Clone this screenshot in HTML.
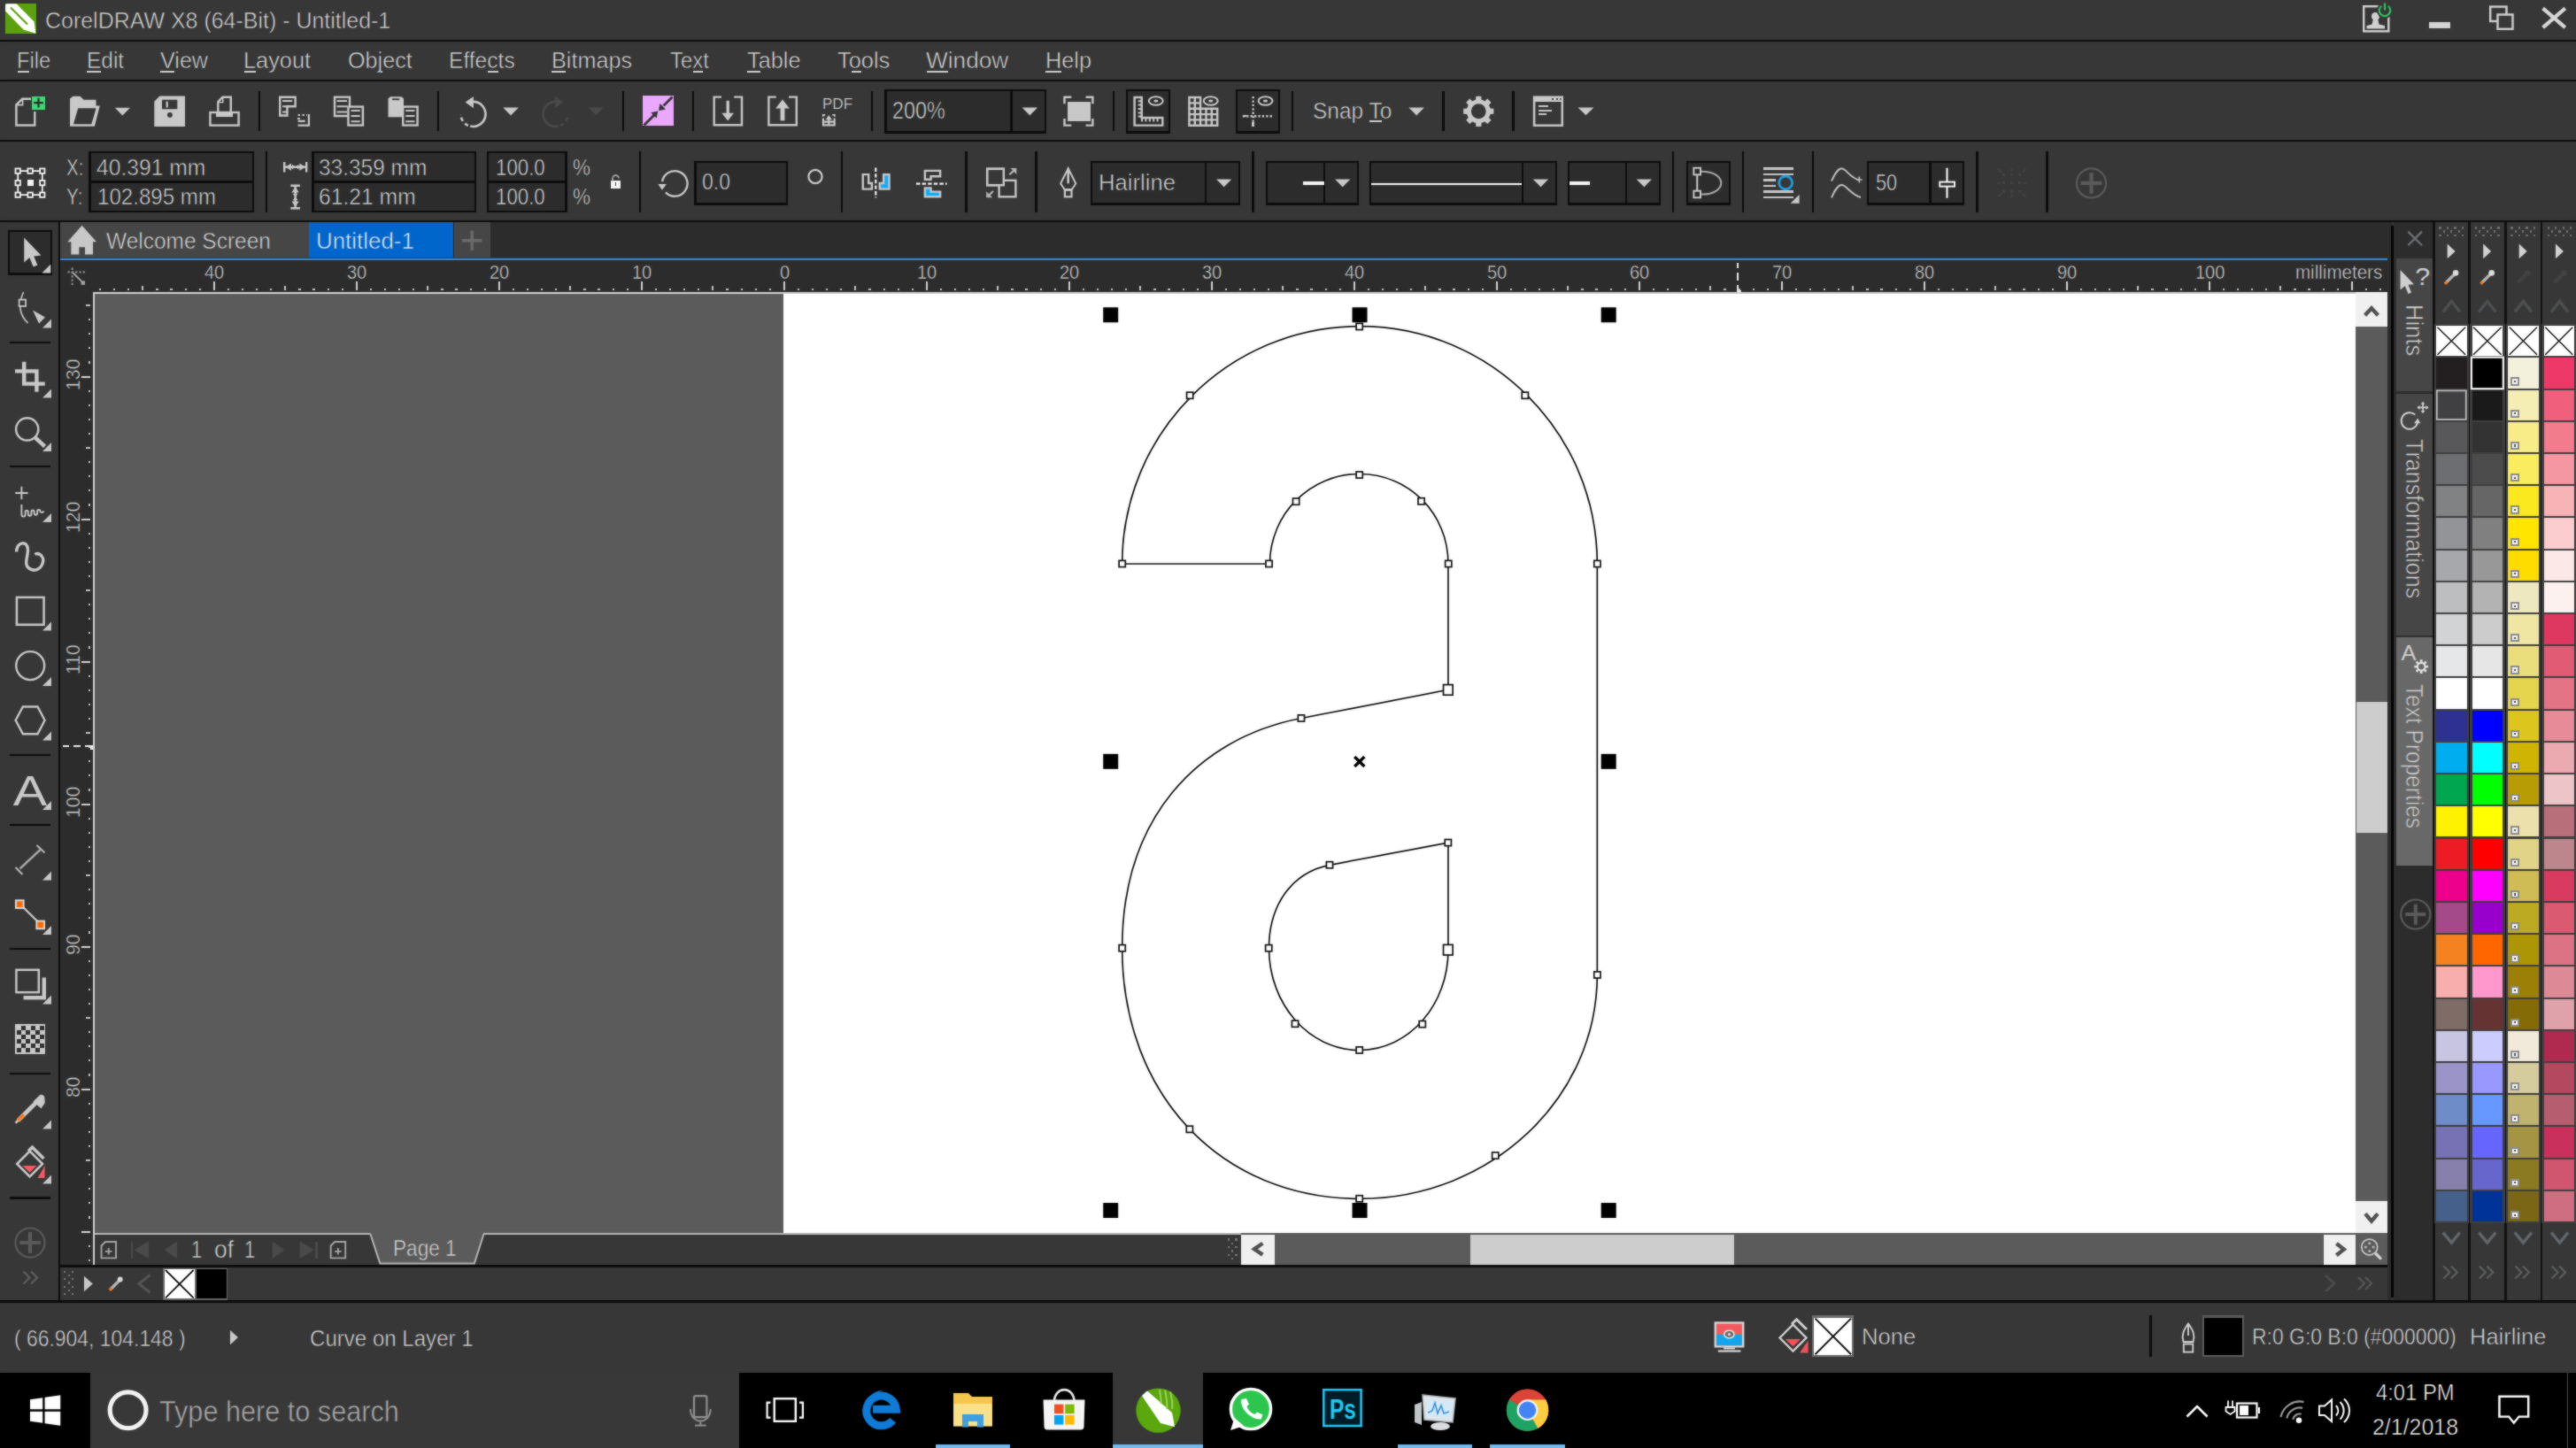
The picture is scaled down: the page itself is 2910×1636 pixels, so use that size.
<!DOCTYPE html>
<html lang="en"><head><meta charset="utf-8"><title>CorelDRAW X8 (64-Bit) - Untitled-1</title>
<style>
html,body{margin:0;padding:0;background:#373737;}
body{width:2910px;height:1636px;position:relative;overflow:hidden;font-family:"Liberation Sans",sans-serif;}
#w{position:absolute;left:0;top:0;width:2910px;height:1636px;}
#soft{position:absolute;left:0;top:0;width:2910px;height:1636px;backdrop-filter:blur(0.9px);opacity:0.5;pointer-events:none;}
#r div{position:absolute;}
.t{position:absolute;white-space:pre;transform-origin:0 0;display:block;}
.t u{text-decoration:underline;text-decoration-thickness:2px;text-underline-offset:3px;}
svg#o{position:absolute;left:0;top:0;}
svg text{font-family:"Liberation Sans",sans-serif;}
</style></head><body>
<div id="w">
<div id="r">
<div style="left:0.0px;top:44.7px;width:2910.0px;height:2.3px;background:#0c0c0c;"></div>
<div style="left:0.0px;top:89.5px;width:2910.0px;height:2.3px;background:#0c0c0c;"></div>
<div style="left:0.0px;top:157.8px;width:2910.0px;height:2.3px;background:#0c0c0c;"></div>
<div style="left:0.0px;top:249.2px;width:2910.0px;height:2.3px;background:#0c0c0c;"></div>
<span class="t" style="left:51.4px;top:8.2px;font-size:26.5px;line-height:30.45px;color:#d2d2d2;transform:scaleX(0.9419);-webkit-text-stroke:0.55px #373737;">CorelDRAW X8 (64-Bit) - Untitled-1</span>
<div style="left:19.8px;top:79.6px;width:13.7px;height:2.1px;background:#d2d2d2;"></div>
<span class="t" style="left:19.4px;top:52.7px;font-size:26.5px;line-height:30.45px;color:#d2d2d2;transform:scaleX(0.8946);-webkit-text-stroke:0.55px #373737;">File</span>
<div style="left:98.4px;top:79.6px;width:15.5px;height:2.1px;background:#d2d2d2;"></div>
<span class="t" style="left:98.0px;top:52.7px;font-size:26.5px;line-height:30.45px;color:#d2d2d2;transform:scaleX(0.9220);-webkit-text-stroke:0.55px #373737;">Edit</span>
<div style="left:181.3px;top:79.6px;width:16.0px;height:2.1px;background:#d2d2d2;"></div>
<span class="t" style="left:180.9px;top:52.7px;font-size:26.5px;line-height:30.45px;color:#d2d2d2;transform:scaleX(0.9481);-webkit-text-stroke:0.55px #373737;">View</span>
<div style="left:275.6px;top:79.6px;width:13.3px;height:2.1px;background:#d2d2d2;"></div>
<span class="t" style="left:275.2px;top:52.7px;font-size:26.5px;line-height:30.45px;color:#d2d2d2;transform:scaleX(0.9564);-webkit-text-stroke:0.55px #373737;">Layout</span>
<div style="left:427.0px;top:79.6px;width:4.8px;height:2.1px;background:#d2d2d2;"></div>
<span class="t" style="left:393.0px;top:52.7px;font-size:26.5px;line-height:30.45px;color:#d2d2d2;transform:scaleX(0.9505);-webkit-text-stroke:0.55px #373737;">Object</span>
<div style="left:551.0px;top:79.6px;width:11.5px;height:2.1px;background:#d2d2d2;"></div>
<span class="t" style="left:507.3px;top:52.7px;font-size:26.5px;line-height:30.45px;color:#d2d2d2;transform:scaleX(0.9277);-webkit-text-stroke:0.55px #373737;">Effects</span>
<div style="left:623.0px;top:79.6px;width:16.0px;height:2.1px;background:#d2d2d2;"></div>
<span class="t" style="left:622.6px;top:52.7px;font-size:26.5px;line-height:30.45px;color:#d2d2d2;transform:scaleX(0.9506);-webkit-text-stroke:0.55px #373737;">Bitmaps</span>
<div style="left:782.7px;top:79.6px;width:11.2px;height:2.1px;background:#d2d2d2;"></div>
<span class="t" style="left:757.0px;top:52.7px;font-size:26.5px;line-height:30.45px;color:#d2d2d2;transform:scaleX(0.9053);-webkit-text-stroke:0.55px #373737;">Text</span>
<div style="left:843.9px;top:79.6px;width:14.7px;height:2.1px;background:#d2d2d2;"></div>
<span class="t" style="left:843.5px;top:52.7px;font-size:26.5px;line-height:30.45px;color:#d2d2d2;transform:scaleX(0.9550);-webkit-text-stroke:0.55px #373737;">Table</span>
<div style="left:962.2px;top:79.6px;width:10.5px;height:2.1px;background:#d2d2d2;"></div>
<span class="t" style="left:946.3px;top:52.7px;font-size:26.5px;line-height:30.45px;color:#d2d2d2;transform:scaleX(0.9586);-webkit-text-stroke:0.55px #373737;">Tools</span>
<div style="left:1046.7px;top:79.6px;width:23.9px;height:2.1px;background:#d2d2d2;"></div>
<span class="t" style="left:1046.3px;top:52.7px;font-size:26.5px;line-height:30.45px;color:#d2d2d2;transform:scaleX(0.9889);-webkit-text-stroke:0.55px #373737;">Window</span>
<div style="left:1181.2px;top:79.6px;width:17.5px;height:2.1px;background:#d2d2d2;"></div>
<span class="t" style="left:1180.8px;top:52.7px;font-size:26.5px;line-height:30.45px;color:#d2d2d2;transform:scaleX(0.9541);-webkit-text-stroke:0.55px #373737;">Help</span>
<div style="left:291.5px;top:102.9px;width:2.4px;height:45.1px;background:#0c0c0c;"></div>
<div style="left:493.9px;top:102.9px;width:2.4px;height:45.1px;background:#0c0c0c;"></div>
<div style="left:702.6px;top:102.9px;width:2.4px;height:45.1px;background:#0c0c0c;"></div>
<div style="left:781.6px;top:102.9px;width:2.4px;height:45.1px;background:#0c0c0c;"></div>
<div style="left:984.0px;top:102.9px;width:2.4px;height:45.1px;background:#0c0c0c;"></div>
<div style="left:1256.8px;top:102.9px;width:2.4px;height:45.1px;background:#0c0c0c;"></div>
<div style="left:1458.8px;top:102.9px;width:2.4px;height:45.1px;background:#0c0c0c;"></div>
<div style="left:1629.4px;top:102.9px;width:2.4px;height:45.1px;background:#0c0c0c;"></div>
<div style="left:1708.2px;top:102.9px;width:2.4px;height:45.1px;background:#0c0c0c;"></div>
<div style="left:999.4px;top:100.5px;width:182.8px;height:50.1px;background:#0c0c0c;"></div>
<div style="left:1001.6px;top:102.7px;width:178.4px;height:45.7px;background:#2d2d2d;"></div>
<div style="left:1141.3px;top:100.5px;width:2.4px;height:50.1px;background:#0c0c0c;"></div>
<span class="t" style="left:1007.6px;top:110.1px;font-size:27px;line-height:31.02px;color:#d2d2d2;transform:scaleX(0.8645);-webkit-text-stroke:0.55px #2d2d2d;">200%</span>
<div style="left:1272.0px;top:100.5px;width:50.4px;height:50.1px;background:#0c0c0c;"></div>
<div style="left:1274.2px;top:102.7px;width:46.0px;height:45.7px;background:#2d2d2d;"></div>
<div style="left:1395.8px;top:100.5px;width:50.4px;height:50.1px;background:#0c0c0c;"></div>
<div style="left:1398.0px;top:102.7px;width:46.0px;height:45.7px;background:#2d2d2d;"></div>
<div style="left:1547.0px;top:136.4px;width:13.7px;height:2.1px;background:#d2d2d2;"></div>
<span class="t" style="left:1482.7px;top:109.5px;font-size:26.5px;line-height:30.45px;color:#d2d2d2;transform:scaleX(0.9229);-webkit-text-stroke:0.55px #373737;">Snap To</span>
<div style="left:300.0px;top:171.0px;width:2.4px;height:69.0px;background:#0c0c0c;"></div>
<div style="left:721.8px;top:171.0px;width:2.4px;height:69.0px;background:#0c0c0c;"></div>
<div style="left:950.1px;top:171.0px;width:2.4px;height:69.0px;background:#0c0c0c;"></div>
<div style="left:1090.4px;top:171.0px;width:2.4px;height:69.0px;background:#0c0c0c;"></div>
<div style="left:1169.4px;top:171.0px;width:2.4px;height:69.0px;background:#0c0c0c;"></div>
<div style="left:1414.4px;top:171.0px;width:2.4px;height:69.0px;background:#0c0c0c;"></div>
<div style="left:1889.1px;top:171.0px;width:2.4px;height:69.0px;background:#0c0c0c;"></div>
<div style="left:1967.9px;top:171.0px;width:2.4px;height:69.0px;background:#0c0c0c;"></div>
<div style="left:2046.9px;top:171.0px;width:2.4px;height:69.0px;background:#0c0c0c;"></div>
<div style="left:2232.3px;top:171.0px;width:2.4px;height:69.0px;background:#0c0c0c;"></div>
<div style="left:2311.3px;top:171.0px;width:2.4px;height:69.0px;background:#0c0c0c;"></div>
<span class="t" style="left:74.7px;top:174.5px;font-size:26px;line-height:29.87px;color:#d2d2d2;transform:scaleX(0.7897);-webkit-text-stroke:0.55px #373737;">X:</span>
<span class="t" style="left:74.7px;top:208.1px;font-size:26px;line-height:29.87px;color:#d2d2d2;transform:scaleX(0.7954);-webkit-text-stroke:0.55px #373737;">Y:</span>
<div style="left:100.3px;top:170.8px;width:187.0px;height:35.6px;background:#0c0c0c;"></div>
<div style="left:102.5px;top:173.0px;width:182.6px;height:31.2px;background:#2d2d2d;"></div>
<div style="left:100.3px;top:204.6px;width:187.0px;height:35.7px;background:#0c0c0c;"></div>
<div style="left:102.5px;top:206.8px;width:182.6px;height:31.3px;background:#2d2d2d;"></div>
<span class="t" style="left:108.7px;top:174.5px;font-size:26px;line-height:29.87px;color:#d2d2d2;transform:scaleX(0.9479);-webkit-text-stroke:0.55px #2d2d2d;">40.391 mm</span>
<span class="t" style="left:110.2px;top:208.1px;font-size:26px;line-height:29.87px;color:#d2d2d2;transform:scaleX(0.9271);-webkit-text-stroke:0.55px #2d2d2d;">102.895 mm</span>
<div style="left:352.3px;top:170.8px;width:185.9px;height:35.6px;background:#0c0c0c;"></div>
<div style="left:354.5px;top:173.0px;width:181.5px;height:31.2px;background:#2d2d2d;"></div>
<div style="left:352.3px;top:204.6px;width:185.9px;height:35.7px;background:#0c0c0c;"></div>
<div style="left:354.5px;top:206.8px;width:181.5px;height:31.3px;background:#2d2d2d;"></div>
<span class="t" style="left:360.0px;top:174.5px;font-size:26px;line-height:29.87px;color:#d2d2d2;transform:scaleX(0.9403);-webkit-text-stroke:0.55px #2d2d2d;">33.359 mm</span>
<span class="t" style="left:360.0px;top:208.1px;font-size:26px;line-height:29.87px;color:#d2d2d2;transform:scaleX(0.9489);-webkit-text-stroke:0.55px #2d2d2d;">61.21 mm</span>
<div style="left:549.9px;top:170.8px;width:90.8px;height:35.6px;background:#0c0c0c;"></div>
<div style="left:552.1px;top:173.0px;width:86.4px;height:31.2px;background:#2d2d2d;"></div>
<div style="left:549.9px;top:204.6px;width:90.8px;height:35.7px;background:#0c0c0c;"></div>
<div style="left:552.1px;top:206.8px;width:86.4px;height:31.3px;background:#2d2d2d;"></div>
<span class="t" style="left:559.6px;top:174.5px;font-size:26px;line-height:29.87px;color:#d2d2d2;transform:scaleX(0.8560);-webkit-text-stroke:0.55px #2d2d2d;">100.0</span>
<span class="t" style="left:559.6px;top:208.1px;font-size:26px;line-height:29.87px;color:#d2d2d2;transform:scaleX(0.8560);-webkit-text-stroke:0.55px #2d2d2d;">100.0</span>
<span class="t" style="left:647.3px;top:174.5px;font-size:26px;line-height:29.87px;color:#d2d2d2;transform:scaleX(0.8652);-webkit-text-stroke:0.55px #373737;">%</span>
<span class="t" style="left:647.3px;top:208.1px;font-size:26px;line-height:29.87px;color:#d2d2d2;transform:scaleX(0.8652);-webkit-text-stroke:0.55px #373737;">%</span>
<div style="left:784.3px;top:181.5px;width:105.7px;height:50.0px;background:#0c0c0c;"></div>
<div style="left:786.5px;top:183.7px;width:101.3px;height:45.6px;background:#2d2d2d;"></div>
<span class="t" style="left:792.5px;top:191.4px;font-size:26px;line-height:29.87px;color:#d2d2d2;transform:scaleX(0.8853);-webkit-text-stroke:0.55px #2d2d2d;">0.0</span>
<div style="left:1231.7px;top:181.5px;width:169.3px;height:50.0px;background:#0c0c0c;"></div>
<div style="left:1233.9px;top:183.7px;width:164.9px;height:45.6px;background:#2d2d2d;"></div>
<div style="left:1360.6px;top:181.5px;width:2.4px;height:50.0px;background:#0c0c0c;"></div>
<span class="t" style="left:1240.5px;top:191.0px;font-size:26.5px;line-height:30.45px;color:#d2d2d2;transform:scaleX(0.9673);-webkit-text-stroke:0.55px #2d2d2d;">Hairline</span>
<div style="left:1429.7px;top:181.5px;width:105.4px;height:50.0px;background:#0c0c0c;"></div>
<div style="left:1431.9px;top:183.7px;width:101.0px;height:45.6px;background:#2d2d2d;"></div>
<div style="left:1495.1px;top:181.5px;width:2.4px;height:50.0px;background:#0c0c0c;"></div>
<div style="left:1546.8px;top:181.5px;width:212.1px;height:50.0px;background:#0c0c0c;"></div>
<div style="left:1549.0px;top:183.7px;width:207.7px;height:45.6px;background:#2d2d2d;"></div>
<div style="left:1718.8px;top:181.5px;width:2.4px;height:50.0px;background:#0c0c0c;"></div>
<div style="left:1770.6px;top:181.5px;width:105.7px;height:50.0px;background:#0c0c0c;"></div>
<div style="left:1772.8px;top:183.7px;width:101.3px;height:45.6px;background:#2d2d2d;"></div>
<div style="left:1836.1px;top:181.5px;width:2.4px;height:50.0px;background:#0c0c0c;"></div>
<div style="left:1904.9px;top:181.5px;width:50.4px;height:50.0px;background:#0c0c0c;"></div>
<div style="left:1907.1px;top:183.7px;width:46.0px;height:45.6px;background:#2d2d2d;"></div>
<div style="left:2109.2px;top:181.5px;width:110.1px;height:50.0px;background:#0c0c0c;"></div>
<div style="left:2111.4px;top:183.7px;width:105.7px;height:45.6px;background:#2d2d2d;"></div>
<div style="left:2179.3px;top:181.5px;width:2.4px;height:50.0px;background:#0c0c0c;"></div>
<span class="t" style="left:2119.0px;top:191.5px;font-size:26px;line-height:29.87px;color:#d2d2d2;transform:scaleX(0.8367);-webkit-text-stroke:0.55px #2d2d2d;">50</span>
<div style="left:66.0px;top:251.4px;width:2.3px;height:1218.6px;background:#0c0c0c;"></div>
<div style="left:10.8px;top:385.5px;width:46.6px;height:2.4px;background:#0c0c0c;"></div>
<div style="left:10.8px;top:526.0px;width:46.6px;height:2.4px;background:#0c0c0c;"></div>
<div style="left:10.8px;top:851.8px;width:46.6px;height:2.4px;background:#0c0c0c;"></div>
<div style="left:10.8px;top:930.7px;width:46.6px;height:2.4px;background:#0c0c0c;"></div>
<div style="left:10.8px;top:1071.0px;width:46.6px;height:2.4px;background:#0c0c0c;"></div>
<div style="left:10.8px;top:1211.8px;width:46.6px;height:2.4px;background:#0c0c0c;"></div>
<div style="left:10.8px;top:1352.3px;width:46.6px;height:2.4px;background:#0c0c0c;"></div>
<div style="left:8.7px;top:260.0px;width:50.8px;height:50.7px;background:#0c0c0c;"></div>
<div style="left:11.0px;top:262.3px;width:46.2px;height:46.1px;background:#2d2d2d;"></div>
<div style="left:68.3px;top:251.4px;width:2633.7px;height:40.1px;background:#2d2d2d;"></div>
<div style="left:68.3px;top:251.4px;width:280.3px;height:40.1px;background:#464646;"></div>
<div style="left:348.6px;top:251.4px;width:163.4px;height:40.1px;background:#0066cc;"></div>
<div style="left:512.6px;top:251.4px;width:41.2px;height:40.1px;background:#464646;"></div>
<span class="t" style="left:120.3px;top:257.3px;font-size:26.5px;line-height:30.45px;color:#d2d2d2;transform:scaleX(0.9236);-webkit-text-stroke:0.55px #464646;">Welcome Screen</span>
<span class="t" style="left:357.0px;top:257.3px;font-size:26.5px;line-height:30.45px;color:#e6e6e6;transform:scaleX(0.9770);-webkit-text-stroke:0.55px #0066cc;">Untitled-1</span>
<div style="left:68.3px;top:291.5px;width:2628.9px;height:2.9px;background:#338ada;"></div>
<div style="left:68.3px;top:294.4px;width:2628.9px;height:35.8px;background:#2d2d2d;"></div>
<div style="left:68.3px;top:294.4px;width:36.5px;height:1135.1px;background:#2d2d2d;"></div>
<div style="left:104.6px;top:330.0px;width:2556.4px;height:2.4px;background:#cfcfcf;"></div>
<div style="left:104.6px;top:330.0px;width:2.4px;height:1099.5px;background:#cfcfcf;"></div>
<div style="left:107.0px;top:332.4px;width:777.7px;height:1061.0px;background:#5b5b5b;"></div>
<div style="left:884.7px;top:332.4px;width:1776.3px;height:1061.0px;background:#ffffff;"></div>
<div style="left:111.9px;top:325.6px;width:2.3px;height:2.4px;background:#c4c4c4;"></div>
<div style="left:128.0px;top:325.6px;width:2.3px;height:2.4px;background:#c4c4c4;"></div>
<div style="left:144.1px;top:325.6px;width:2.3px;height:2.4px;background:#c4c4c4;"></div>
<div style="left:160.3px;top:323.4px;width:2.1px;height:4.7px;background:#c4c4c4;"></div>
<div style="left:176.3px;top:325.6px;width:2.3px;height:2.4px;background:#c4c4c4;"></div>
<div style="left:192.4px;top:325.6px;width:2.3px;height:2.4px;background:#c4c4c4;"></div>
<div style="left:208.5px;top:325.6px;width:2.3px;height:2.4px;background:#c4c4c4;"></div>
<div style="left:224.6px;top:325.6px;width:2.3px;height:2.4px;background:#c4c4c4;"></div>
<div style="left:240.8px;top:318.2px;width:2.1px;height:10.1px;background:#d0d0d0;"></div>
<div style="left:256.8px;top:325.6px;width:2.3px;height:2.4px;background:#c4c4c4;"></div>
<div style="left:272.9px;top:325.6px;width:2.3px;height:2.4px;background:#c4c4c4;"></div>
<div style="left:289.0px;top:325.6px;width:2.3px;height:2.4px;background:#c4c4c4;"></div>
<div style="left:305.1px;top:325.6px;width:2.3px;height:2.4px;background:#c4c4c4;"></div>
<div style="left:321.3px;top:323.4px;width:2.1px;height:4.7px;background:#c4c4c4;"></div>
<div style="left:337.3px;top:325.6px;width:2.3px;height:2.4px;background:#c4c4c4;"></div>
<div style="left:353.4px;top:325.6px;width:2.3px;height:2.4px;background:#c4c4c4;"></div>
<div style="left:369.5px;top:325.6px;width:2.3px;height:2.4px;background:#c4c4c4;"></div>
<div style="left:385.6px;top:325.6px;width:2.3px;height:2.4px;background:#c4c4c4;"></div>
<div style="left:401.8px;top:318.2px;width:2.1px;height:10.1px;background:#d0d0d0;"></div>
<div style="left:417.8px;top:325.6px;width:2.3px;height:2.4px;background:#c4c4c4;"></div>
<div style="left:433.9px;top:325.6px;width:2.3px;height:2.4px;background:#c4c4c4;"></div>
<div style="left:450.0px;top:325.6px;width:2.3px;height:2.4px;background:#c4c4c4;"></div>
<div style="left:466.1px;top:325.6px;width:2.3px;height:2.4px;background:#c4c4c4;"></div>
<div style="left:482.3px;top:323.4px;width:2.1px;height:4.7px;background:#c4c4c4;"></div>
<div style="left:498.3px;top:325.6px;width:2.3px;height:2.4px;background:#c4c4c4;"></div>
<div style="left:514.4px;top:325.6px;width:2.3px;height:2.4px;background:#c4c4c4;"></div>
<div style="left:530.5px;top:325.6px;width:2.3px;height:2.4px;background:#c4c4c4;"></div>
<div style="left:546.6px;top:325.6px;width:2.3px;height:2.4px;background:#c4c4c4;"></div>
<div style="left:562.9px;top:318.2px;width:2.1px;height:10.1px;background:#d0d0d0;"></div>
<div style="left:578.9px;top:325.6px;width:2.3px;height:2.4px;background:#c4c4c4;"></div>
<div style="left:594.9px;top:325.6px;width:2.3px;height:2.4px;background:#c4c4c4;"></div>
<div style="left:611.0px;top:325.6px;width:2.3px;height:2.4px;background:#c4c4c4;"></div>
<div style="left:627.1px;top:325.6px;width:2.3px;height:2.4px;background:#c4c4c4;"></div>
<div style="left:643.4px;top:323.4px;width:2.1px;height:4.7px;background:#c4c4c4;"></div>
<div style="left:659.4px;top:325.6px;width:2.3px;height:2.4px;background:#c4c4c4;"></div>
<div style="left:675.4px;top:325.6px;width:2.3px;height:2.4px;background:#c4c4c4;"></div>
<div style="left:691.5px;top:325.6px;width:2.3px;height:2.4px;background:#c4c4c4;"></div>
<div style="left:707.6px;top:325.6px;width:2.3px;height:2.4px;background:#c4c4c4;"></div>
<div style="left:723.9px;top:318.2px;width:2.1px;height:10.1px;background:#d0d0d0;"></div>
<div style="left:739.9px;top:325.6px;width:2.3px;height:2.4px;background:#c4c4c4;"></div>
<div style="left:755.9px;top:325.6px;width:2.3px;height:2.4px;background:#c4c4c4;"></div>
<div style="left:772.0px;top:325.6px;width:2.3px;height:2.4px;background:#c4c4c4;"></div>
<div style="left:788.1px;top:325.6px;width:2.3px;height:2.4px;background:#c4c4c4;"></div>
<div style="left:804.4px;top:323.4px;width:2.1px;height:4.7px;background:#c4c4c4;"></div>
<div style="left:820.4px;top:325.6px;width:2.3px;height:2.4px;background:#c4c4c4;"></div>
<div style="left:836.5px;top:325.6px;width:2.3px;height:2.4px;background:#c4c4c4;"></div>
<div style="left:852.5px;top:325.6px;width:2.3px;height:2.4px;background:#c4c4c4;"></div>
<div style="left:868.6px;top:325.6px;width:2.3px;height:2.4px;background:#c4c4c4;"></div>
<div style="left:884.9px;top:318.2px;width:2.1px;height:10.1px;background:#d0d0d0;"></div>
<div style="left:900.9px;top:325.6px;width:2.3px;height:2.4px;background:#c4c4c4;"></div>
<div style="left:917.0px;top:325.6px;width:2.3px;height:2.4px;background:#c4c4c4;"></div>
<div style="left:933.0px;top:325.6px;width:2.3px;height:2.4px;background:#c4c4c4;"></div>
<div style="left:949.1px;top:325.6px;width:2.3px;height:2.4px;background:#c4c4c4;"></div>
<div style="left:965.4px;top:323.4px;width:2.1px;height:4.7px;background:#c4c4c4;"></div>
<div style="left:981.4px;top:325.6px;width:2.3px;height:2.4px;background:#c4c4c4;"></div>
<div style="left:997.5px;top:325.6px;width:2.3px;height:2.4px;background:#c4c4c4;"></div>
<div style="left:1013.6px;top:325.6px;width:2.3px;height:2.4px;background:#c4c4c4;"></div>
<div style="left:1029.6px;top:325.6px;width:2.3px;height:2.4px;background:#c4c4c4;"></div>
<div style="left:1045.9px;top:318.2px;width:2.1px;height:10.1px;background:#d0d0d0;"></div>
<div style="left:1061.8px;top:325.6px;width:2.3px;height:2.4px;background:#c4c4c4;"></div>
<div style="left:1077.9px;top:325.6px;width:2.3px;height:2.4px;background:#c4c4c4;"></div>
<div style="left:1094.0px;top:325.6px;width:2.3px;height:2.4px;background:#c4c4c4;"></div>
<div style="left:1110.1px;top:325.6px;width:2.3px;height:2.4px;background:#c4c4c4;"></div>
<div style="left:1126.4px;top:323.4px;width:2.1px;height:4.7px;background:#c4c4c4;"></div>
<div style="left:1142.3px;top:325.6px;width:2.3px;height:2.4px;background:#c4c4c4;"></div>
<div style="left:1158.4px;top:325.6px;width:2.3px;height:2.4px;background:#c4c4c4;"></div>
<div style="left:1174.5px;top:325.6px;width:2.3px;height:2.4px;background:#c4c4c4;"></div>
<div style="left:1190.6px;top:325.6px;width:2.3px;height:2.4px;background:#c4c4c4;"></div>
<div style="left:1206.9px;top:318.2px;width:2.1px;height:10.1px;background:#d0d0d0;"></div>
<div style="left:1222.8px;top:325.6px;width:2.3px;height:2.4px;background:#c4c4c4;"></div>
<div style="left:1238.9px;top:325.6px;width:2.3px;height:2.4px;background:#c4c4c4;"></div>
<div style="left:1255.0px;top:325.6px;width:2.3px;height:2.4px;background:#c4c4c4;"></div>
<div style="left:1271.1px;top:325.6px;width:2.3px;height:2.4px;background:#c4c4c4;"></div>
<div style="left:1287.4px;top:323.4px;width:2.1px;height:4.7px;background:#c4c4c4;"></div>
<div style="left:1303.3px;top:325.6px;width:2.3px;height:2.4px;background:#c4c4c4;"></div>
<div style="left:1319.4px;top:325.6px;width:2.3px;height:2.4px;background:#c4c4c4;"></div>
<div style="left:1335.5px;top:325.6px;width:2.3px;height:2.4px;background:#c4c4c4;"></div>
<div style="left:1351.6px;top:325.6px;width:2.3px;height:2.4px;background:#c4c4c4;"></div>
<div style="left:1367.9px;top:318.2px;width:2.1px;height:10.1px;background:#d0d0d0;"></div>
<div style="left:1383.8px;top:325.6px;width:2.3px;height:2.4px;background:#c4c4c4;"></div>
<div style="left:1399.9px;top:325.6px;width:2.3px;height:2.4px;background:#c4c4c4;"></div>
<div style="left:1416.0px;top:325.6px;width:2.3px;height:2.4px;background:#c4c4c4;"></div>
<div style="left:1432.2px;top:325.6px;width:2.3px;height:2.4px;background:#c4c4c4;"></div>
<div style="left:1448.4px;top:323.4px;width:2.1px;height:4.7px;background:#c4c4c4;"></div>
<div style="left:1464.3px;top:325.6px;width:2.3px;height:2.4px;background:#c4c4c4;"></div>
<div style="left:1480.4px;top:325.6px;width:2.3px;height:2.4px;background:#c4c4c4;"></div>
<div style="left:1496.5px;top:325.6px;width:2.3px;height:2.4px;background:#c4c4c4;"></div>
<div style="left:1512.7px;top:325.6px;width:2.3px;height:2.4px;background:#c4c4c4;"></div>
<div style="left:1528.9px;top:318.2px;width:2.1px;height:10.1px;background:#d0d0d0;"></div>
<div style="left:1544.8px;top:325.6px;width:2.3px;height:2.4px;background:#c4c4c4;"></div>
<div style="left:1560.9px;top:325.6px;width:2.3px;height:2.4px;background:#c4c4c4;"></div>
<div style="left:1577.0px;top:325.6px;width:2.3px;height:2.4px;background:#c4c4c4;"></div>
<div style="left:1593.2px;top:325.6px;width:2.3px;height:2.4px;background:#c4c4c4;"></div>
<div style="left:1609.4px;top:323.4px;width:2.1px;height:4.7px;background:#c4c4c4;"></div>
<div style="left:1625.3px;top:325.6px;width:2.3px;height:2.4px;background:#c4c4c4;"></div>
<div style="left:1641.4px;top:325.6px;width:2.3px;height:2.4px;background:#c4c4c4;"></div>
<div style="left:1657.5px;top:325.6px;width:2.3px;height:2.4px;background:#c4c4c4;"></div>
<div style="left:1673.7px;top:325.6px;width:2.3px;height:2.4px;background:#c4c4c4;"></div>
<div style="left:1689.9px;top:318.2px;width:2.1px;height:10.1px;background:#d0d0d0;"></div>
<div style="left:1705.8px;top:325.6px;width:2.3px;height:2.4px;background:#c4c4c4;"></div>
<div style="left:1721.9px;top:325.6px;width:2.3px;height:2.4px;background:#c4c4c4;"></div>
<div style="left:1738.0px;top:325.6px;width:2.3px;height:2.4px;background:#c4c4c4;"></div>
<div style="left:1754.2px;top:325.6px;width:2.3px;height:2.4px;background:#c4c4c4;"></div>
<div style="left:1770.4px;top:323.4px;width:2.1px;height:4.7px;background:#c4c4c4;"></div>
<div style="left:1786.3px;top:325.6px;width:2.3px;height:2.4px;background:#c4c4c4;"></div>
<div style="left:1802.4px;top:325.6px;width:2.3px;height:2.4px;background:#c4c4c4;"></div>
<div style="left:1818.5px;top:325.6px;width:2.3px;height:2.4px;background:#c4c4c4;"></div>
<div style="left:1834.7px;top:325.6px;width:2.3px;height:2.4px;background:#c4c4c4;"></div>
<div style="left:1850.9px;top:318.2px;width:2.1px;height:10.1px;background:#d0d0d0;"></div>
<div style="left:1866.8px;top:325.6px;width:2.3px;height:2.4px;background:#c4c4c4;"></div>
<div style="left:1882.9px;top:325.6px;width:2.3px;height:2.4px;background:#c4c4c4;"></div>
<div style="left:1899.0px;top:325.6px;width:2.3px;height:2.4px;background:#c4c4c4;"></div>
<div style="left:1915.2px;top:325.6px;width:2.3px;height:2.4px;background:#c4c4c4;"></div>
<div style="left:1931.4px;top:323.4px;width:2.1px;height:4.7px;background:#c4c4c4;"></div>
<div style="left:1947.3px;top:325.6px;width:2.3px;height:2.4px;background:#c4c4c4;"></div>
<div style="left:1963.4px;top:325.6px;width:2.3px;height:2.4px;background:#c4c4c4;"></div>
<div style="left:1979.6px;top:325.6px;width:2.3px;height:2.4px;background:#c4c4c4;"></div>
<div style="left:1995.7px;top:325.6px;width:2.3px;height:2.4px;background:#c4c4c4;"></div>
<div style="left:2011.9px;top:318.2px;width:2.1px;height:10.1px;background:#d0d0d0;"></div>
<div style="left:2027.8px;top:325.6px;width:2.3px;height:2.4px;background:#c4c4c4;"></div>
<div style="left:2043.9px;top:325.6px;width:2.3px;height:2.4px;background:#c4c4c4;"></div>
<div style="left:2060.1px;top:325.6px;width:2.3px;height:2.4px;background:#c4c4c4;"></div>
<div style="left:2076.2px;top:325.6px;width:2.3px;height:2.4px;background:#c4c4c4;"></div>
<div style="left:2092.3px;top:323.4px;width:2.1px;height:4.7px;background:#c4c4c4;"></div>
<div style="left:2108.3px;top:325.6px;width:2.3px;height:2.4px;background:#c4c4c4;"></div>
<div style="left:2124.4px;top:325.6px;width:2.3px;height:2.4px;background:#c4c4c4;"></div>
<div style="left:2140.6px;top:325.6px;width:2.3px;height:2.4px;background:#c4c4c4;"></div>
<div style="left:2156.7px;top:325.6px;width:2.3px;height:2.4px;background:#c4c4c4;"></div>
<div style="left:2172.8px;top:318.2px;width:2.1px;height:10.1px;background:#d0d0d0;"></div>
<div style="left:2188.8px;top:325.6px;width:2.3px;height:2.4px;background:#c4c4c4;"></div>
<div style="left:2204.9px;top:325.6px;width:2.3px;height:2.4px;background:#c4c4c4;"></div>
<div style="left:2221.1px;top:325.6px;width:2.3px;height:2.4px;background:#c4c4c4;"></div>
<div style="left:2237.2px;top:325.6px;width:2.3px;height:2.4px;background:#c4c4c4;"></div>
<div style="left:2253.3px;top:323.4px;width:2.1px;height:4.7px;background:#c4c4c4;"></div>
<div style="left:2269.3px;top:325.6px;width:2.3px;height:2.4px;background:#c4c4c4;"></div>
<div style="left:2285.4px;top:325.6px;width:2.3px;height:2.4px;background:#c4c4c4;"></div>
<div style="left:2301.6px;top:325.6px;width:2.3px;height:2.4px;background:#c4c4c4;"></div>
<div style="left:2317.7px;top:325.6px;width:2.3px;height:2.4px;background:#c4c4c4;"></div>
<div style="left:2333.8px;top:318.2px;width:2.1px;height:10.1px;background:#d0d0d0;"></div>
<div style="left:2349.8px;top:325.6px;width:2.3px;height:2.4px;background:#c4c4c4;"></div>
<div style="left:2365.9px;top:325.6px;width:2.3px;height:2.4px;background:#c4c4c4;"></div>
<div style="left:2382.1px;top:325.6px;width:2.3px;height:2.4px;background:#c4c4c4;"></div>
<div style="left:2398.2px;top:325.6px;width:2.3px;height:2.4px;background:#c4c4c4;"></div>
<div style="left:2414.3px;top:323.4px;width:2.1px;height:4.7px;background:#c4c4c4;"></div>
<div style="left:2430.3px;top:325.6px;width:2.3px;height:2.4px;background:#c4c4c4;"></div>
<div style="left:2446.4px;top:325.6px;width:2.3px;height:2.4px;background:#c4c4c4;"></div>
<div style="left:2462.6px;top:325.6px;width:2.3px;height:2.4px;background:#c4c4c4;"></div>
<div style="left:2478.7px;top:325.6px;width:2.3px;height:2.4px;background:#c4c4c4;"></div>
<div style="left:2494.8px;top:318.2px;width:2.1px;height:10.1px;background:#d0d0d0;"></div>
<div style="left:2510.8px;top:325.6px;width:2.3px;height:2.4px;background:#c4c4c4;"></div>
<div style="left:2526.9px;top:325.6px;width:2.3px;height:2.4px;background:#c4c4c4;"></div>
<div style="left:2543.1px;top:325.6px;width:2.3px;height:2.4px;background:#c4c4c4;"></div>
<div style="left:2559.2px;top:325.6px;width:2.3px;height:2.4px;background:#c4c4c4;"></div>
<div style="left:2575.3px;top:323.4px;width:2.1px;height:4.7px;background:#c4c4c4;"></div>
<div style="left:2591.3px;top:325.6px;width:2.3px;height:2.4px;background:#c4c4c4;"></div>
<div style="left:2607.4px;top:325.6px;width:2.3px;height:2.4px;background:#c4c4c4;"></div>
<div style="left:2623.6px;top:325.6px;width:2.3px;height:2.4px;background:#c4c4c4;"></div>
<div style="left:2639.7px;top:325.6px;width:2.3px;height:2.4px;background:#c4c4c4;"></div>
<div style="left:2655.8px;top:318.2px;width:2.1px;height:10.1px;background:#d0d0d0;"></div>
<div style="left:2671.8px;top:325.6px;width:2.3px;height:2.4px;background:#c4c4c4;"></div>
<div style="left:2688.0px;top:325.6px;width:2.3px;height:2.4px;background:#c4c4c4;"></div>
<span class="t" style="left:231.1px;top:295.8px;font-size:21.5px;line-height:24.70px;color:#c8c8c8;transform:scaleX(0.9300);-webkit-text-stroke:0.4px #2d2d2d;">40</span>
<span class="t" style="left:392.1px;top:295.8px;font-size:21.5px;line-height:24.70px;color:#c8c8c8;transform:scaleX(0.9300);-webkit-text-stroke:0.4px #2d2d2d;">30</span>
<span class="t" style="left:553.1px;top:295.8px;font-size:21.5px;line-height:24.70px;color:#c8c8c8;transform:scaleX(0.9300);-webkit-text-stroke:0.4px #2d2d2d;">20</span>
<span class="t" style="left:714.1px;top:295.8px;font-size:21.5px;line-height:24.70px;color:#c8c8c8;transform:scaleX(0.9300);-webkit-text-stroke:0.4px #2d2d2d;">10</span>
<span class="t" style="left:880.6px;top:295.8px;font-size:21.5px;line-height:24.70px;color:#c8c8c8;transform:scaleX(0.9300);-webkit-text-stroke:0.4px #2d2d2d;">0</span>
<span class="t" style="left:1036.1px;top:295.8px;font-size:21.5px;line-height:24.70px;color:#c8c8c8;transform:scaleX(0.9300);-webkit-text-stroke:0.4px #2d2d2d;">10</span>
<span class="t" style="left:1197.1px;top:295.8px;font-size:21.5px;line-height:24.70px;color:#c8c8c8;transform:scaleX(0.9300);-webkit-text-stroke:0.4px #2d2d2d;">20</span>
<span class="t" style="left:1358.1px;top:295.8px;font-size:21.5px;line-height:24.70px;color:#c8c8c8;transform:scaleX(0.9300);-webkit-text-stroke:0.4px #2d2d2d;">30</span>
<span class="t" style="left:1519.1px;top:295.8px;font-size:21.5px;line-height:24.70px;color:#c8c8c8;transform:scaleX(0.9300);-webkit-text-stroke:0.4px #2d2d2d;">40</span>
<span class="t" style="left:1680.1px;top:295.8px;font-size:21.5px;line-height:24.70px;color:#c8c8c8;transform:scaleX(0.9300);-webkit-text-stroke:0.4px #2d2d2d;">50</span>
<span class="t" style="left:1841.1px;top:295.8px;font-size:21.5px;line-height:24.70px;color:#c8c8c8;transform:scaleX(0.9300);-webkit-text-stroke:0.4px #2d2d2d;">60</span>
<span class="t" style="left:2002.1px;top:295.8px;font-size:21.5px;line-height:24.70px;color:#c8c8c8;transform:scaleX(0.9300);-webkit-text-stroke:0.4px #2d2d2d;">70</span>
<span class="t" style="left:2163.1px;top:295.8px;font-size:21.5px;line-height:24.70px;color:#c8c8c8;transform:scaleX(0.9300);-webkit-text-stroke:0.4px #2d2d2d;">80</span>
<span class="t" style="left:2324.1px;top:295.8px;font-size:21.5px;line-height:24.70px;color:#c8c8c8;transform:scaleX(0.9300);-webkit-text-stroke:0.4px #2d2d2d;">90</span>
<span class="t" style="left:2479.5px;top:295.8px;font-size:21.5px;line-height:24.70px;color:#c8c8c8;transform:scaleX(0.9300);-webkit-text-stroke:0.4px #2d2d2d;">100</span>
<span class="t" style="left:2593.2px;top:295.8px;font-size:21.5px;line-height:24.70px;color:#c8c8c8;transform:scaleX(0.9559);-webkit-text-stroke:0.4px #2d2d2d;">millimeters</span>
<div style="left:1961.9px;top:296.5px;width:2.4px;height:6.0px;background:#e8e8e8;"></div>
<div style="left:1961.9px;top:308.0px;width:2.4px;height:8.5px;background:#e8e8e8;"></div>
<div style="left:1961.9px;top:322.0px;width:2.4px;height:8.0px;background:#e8e8e8;"></div>
<div style="left:1963.1px;top:327.6px;width:4.0px;height:2.4px;background:#e8e8e8;"></div>
<div style="left:99.7px;top:1422.7px;width:2.4px;height:2.3px;background:#c4c4c4;"></div>
<div style="left:99.7px;top:1406.5px;width:2.4px;height:2.3px;background:#c4c4c4;"></div>
<div style="left:92.2px;top:1390.6px;width:10.1px;height:2.1px;background:#d0d0d0;"></div>
<div style="left:99.7px;top:1374.3px;width:2.4px;height:2.3px;background:#c4c4c4;"></div>
<div style="left:99.7px;top:1358.2px;width:2.4px;height:2.3px;background:#c4c4c4;"></div>
<div style="left:99.7px;top:1342.2px;width:2.4px;height:2.3px;background:#c4c4c4;"></div>
<div style="left:99.7px;top:1326.0px;width:2.4px;height:2.3px;background:#c4c4c4;"></div>
<div style="left:97.4px;top:1310.1px;width:4.7px;height:2.1px;background:#c4c4c4;"></div>
<div style="left:99.7px;top:1293.8px;width:2.4px;height:2.3px;background:#c4c4c4;"></div>
<div style="left:99.7px;top:1277.8px;width:2.4px;height:2.3px;background:#c4c4c4;"></div>
<div style="left:99.7px;top:1261.7px;width:2.4px;height:2.3px;background:#c4c4c4;"></div>
<div style="left:99.7px;top:1245.5px;width:2.4px;height:2.3px;background:#c4c4c4;"></div>
<div style="left:92.2px;top:1229.5px;width:10.1px;height:2.1px;background:#d0d0d0;"></div>
<div style="left:99.7px;top:1213.3px;width:2.4px;height:2.3px;background:#c4c4c4;"></div>
<div style="left:99.7px;top:1197.2px;width:2.4px;height:2.3px;background:#c4c4c4;"></div>
<div style="left:99.7px;top:1181.2px;width:2.4px;height:2.3px;background:#c4c4c4;"></div>
<div style="left:99.7px;top:1165.0px;width:2.4px;height:2.3px;background:#c4c4c4;"></div>
<div style="left:97.4px;top:1149.1px;width:4.7px;height:2.1px;background:#c4c4c4;"></div>
<div style="left:99.7px;top:1132.8px;width:2.4px;height:2.3px;background:#c4c4c4;"></div>
<div style="left:99.7px;top:1116.8px;width:2.4px;height:2.3px;background:#c4c4c4;"></div>
<div style="left:99.7px;top:1100.6px;width:2.4px;height:2.3px;background:#c4c4c4;"></div>
<div style="left:99.7px;top:1084.5px;width:2.4px;height:2.3px;background:#c4c4c4;"></div>
<div style="left:92.2px;top:1068.5px;width:10.1px;height:2.1px;background:#d0d0d0;"></div>
<div style="left:99.7px;top:1052.3px;width:2.4px;height:2.3px;background:#c4c4c4;"></div>
<div style="left:99.7px;top:1036.2px;width:2.4px;height:2.3px;background:#c4c4c4;"></div>
<div style="left:99.7px;top:1020.2px;width:2.4px;height:2.3px;background:#c4c4c4;"></div>
<div style="left:99.7px;top:1004.1px;width:2.4px;height:2.3px;background:#c4c4c4;"></div>
<div style="left:97.4px;top:988.1px;width:4.7px;height:2.1px;background:#c4c4c4;"></div>
<div style="left:99.7px;top:971.9px;width:2.4px;height:2.3px;background:#c4c4c4;"></div>
<div style="left:99.7px;top:955.8px;width:2.4px;height:2.3px;background:#c4c4c4;"></div>
<div style="left:99.7px;top:939.7px;width:2.4px;height:2.3px;background:#c4c4c4;"></div>
<div style="left:99.7px;top:923.6px;width:2.4px;height:2.3px;background:#c4c4c4;"></div>
<div style="left:92.2px;top:907.6px;width:10.1px;height:2.1px;background:#d0d0d0;"></div>
<div style="left:99.7px;top:891.4px;width:2.4px;height:2.3px;background:#c4c4c4;"></div>
<div style="left:99.7px;top:875.2px;width:2.4px;height:2.3px;background:#c4c4c4;"></div>
<div style="left:99.7px;top:859.2px;width:2.4px;height:2.3px;background:#c4c4c4;"></div>
<div style="left:99.7px;top:843.1px;width:2.4px;height:2.3px;background:#c4c4c4;"></div>
<div style="left:97.4px;top:827.1px;width:4.7px;height:2.1px;background:#c4c4c4;"></div>
<div style="left:99.7px;top:810.9px;width:2.4px;height:2.3px;background:#c4c4c4;"></div>
<div style="left:99.7px;top:794.8px;width:2.4px;height:2.3px;background:#c4c4c4;"></div>
<div style="left:99.7px;top:778.6px;width:2.4px;height:2.3px;background:#c4c4c4;"></div>
<div style="left:99.7px;top:762.6px;width:2.4px;height:2.3px;background:#c4c4c4;"></div>
<div style="left:92.2px;top:746.6px;width:10.1px;height:2.1px;background:#d0d0d0;"></div>
<div style="left:99.7px;top:730.4px;width:2.4px;height:2.3px;background:#c4c4c4;"></div>
<div style="left:99.7px;top:714.2px;width:2.4px;height:2.3px;background:#c4c4c4;"></div>
<div style="left:99.7px;top:698.1px;width:2.4px;height:2.3px;background:#c4c4c4;"></div>
<div style="left:99.7px;top:682.1px;width:2.4px;height:2.3px;background:#c4c4c4;"></div>
<div style="left:97.4px;top:666.1px;width:4.7px;height:2.1px;background:#c4c4c4;"></div>
<div style="left:99.7px;top:649.9px;width:2.4px;height:2.3px;background:#c4c4c4;"></div>
<div style="left:99.7px;top:633.8px;width:2.4px;height:2.3px;background:#c4c4c4;"></div>
<div style="left:99.7px;top:617.6px;width:2.4px;height:2.3px;background:#c4c4c4;"></div>
<div style="left:99.7px;top:601.6px;width:2.4px;height:2.3px;background:#c4c4c4;"></div>
<div style="left:92.2px;top:585.6px;width:10.1px;height:2.1px;background:#d0d0d0;"></div>
<div style="left:99.7px;top:569.4px;width:2.4px;height:2.3px;background:#c4c4c4;"></div>
<div style="left:99.7px;top:553.2px;width:2.4px;height:2.3px;background:#c4c4c4;"></div>
<div style="left:99.7px;top:537.1px;width:2.4px;height:2.3px;background:#c4c4c4;"></div>
<div style="left:99.7px;top:521.1px;width:2.4px;height:2.3px;background:#c4c4c4;"></div>
<div style="left:97.4px;top:505.0px;width:4.7px;height:2.1px;background:#c4c4c4;"></div>
<div style="left:99.7px;top:488.9px;width:2.4px;height:2.3px;background:#c4c4c4;"></div>
<div style="left:99.7px;top:472.8px;width:2.4px;height:2.3px;background:#c4c4c4;"></div>
<div style="left:99.7px;top:456.6px;width:2.4px;height:2.3px;background:#c4c4c4;"></div>
<div style="left:99.7px;top:440.6px;width:2.4px;height:2.3px;background:#c4c4c4;"></div>
<div style="left:92.2px;top:424.5px;width:10.1px;height:2.1px;background:#d0d0d0;"></div>
<div style="left:99.7px;top:408.4px;width:2.4px;height:2.3px;background:#c4c4c4;"></div>
<div style="left:99.7px;top:392.2px;width:2.4px;height:2.3px;background:#c4c4c4;"></div>
<div style="left:99.7px;top:376.1px;width:2.4px;height:2.3px;background:#c4c4c4;"></div>
<div style="left:99.7px;top:360.0px;width:2.4px;height:2.3px;background:#c4c4c4;"></div>
<div style="left:97.4px;top:344.1px;width:4.7px;height:2.1px;background:#c4c4c4;"></div>
<span class="t" style="left:92.4px;top:440.7px;font-size:21.5px;line-height:21.5px;color:#c8c8c8;-webkit-text-stroke:0.4px #2d2d2d;transform-origin:0 0;transform:rotate(-90deg) scaleX(0.99) translateY(-19.2px);">130</span>
<span class="t" style="left:92.4px;top:601.7px;font-size:21.5px;line-height:21.5px;color:#c8c8c8;-webkit-text-stroke:0.4px #2d2d2d;transform-origin:0 0;transform:rotate(-90deg) scaleX(0.99) translateY(-19.2px);">120</span>
<span class="t" style="left:92.4px;top:761.9px;font-size:21.5px;line-height:21.5px;color:#c8c8c8;-webkit-text-stroke:0.4px #2d2d2d;transform-origin:0 0;transform:rotate(-90deg) scaleX(0.99) translateY(-19.2px);">110</span>
<span class="t" style="left:92.4px;top:923.7px;font-size:21.5px;line-height:21.5px;color:#c8c8c8;-webkit-text-stroke:0.4px #2d2d2d;transform-origin:0 0;transform:rotate(-90deg) scaleX(0.99) translateY(-19.2px);">100</span>
<span class="t" style="left:92.4px;top:1078.7px;font-size:21.5px;line-height:21.5px;color:#c8c8c8;-webkit-text-stroke:0.4px #2d2d2d;transform-origin:0 0;transform:rotate(-90deg) scaleX(0.99) translateY(-19.2px);">90</span>
<span class="t" style="left:92.4px;top:1239.7px;font-size:21.5px;line-height:21.5px;color:#c8c8c8;-webkit-text-stroke:0.4px #2d2d2d;transform-origin:0 0;transform:rotate(-90deg) scaleX(0.99) translateY(-19.2px);">80</span>
<div style="left:70.5px;top:841.6px;width:7.5px;height:2.4px;background:#e8e8e8;"></div>
<div style="left:83.0px;top:841.6px;width:8.0px;height:2.4px;background:#e8e8e8;"></div>
<div style="left:96.0px;top:841.6px;width:8.6px;height:2.4px;background:#e8e8e8;"></div>
<div style="left:102.2px;top:842.8px;width:2.4px;height:4.0px;background:#e8e8e8;"></div>
<div style="left:2661.0px;top:330.0px;width:36.2px;height:1063.4px;background:#5b5b5b;"></div>
<div style="left:2661.0px;top:330.0px;width:36.2px;height:38.6px;background:#f0f0f0;"></div>
<div style="left:2661.0px;top:1356.6px;width:36.2px;height:36.8px;background:#f0f0f0;"></div>
<div style="left:2662.4px;top:792.5px;width:34.8px;height:148.6px;background:#cdcdcd;"></div>
<div style="left:2697.2px;top:251.4px;width:3.7px;height:1218.6px;background:#2d2d2d;"></div>
<div style="left:6.2px;top:4.2px;width:34.6px;height:34.0px;background:#5da010;"></div>
<div style="left:2743.5px;top:25.2px;width:24.1px;height:6.8px;background:#d4d4d4;"></div>
<div style="left:35.9px;top:108.5px;width:15.3px;height:15.3px;background:#3fd873;"></div>
<div style="left:244.0px;top:128.2px;width:19.0px;height:3.6px;background:#c8c8c8;"></div>
<div style="left:336.2px;top:132.8px;width:2.6px;height:2.4px;background:#c8c8c8;"></div>
<div style="left:726.4px;top:108.4px;width:34.3px;height:34.1px;background:#e9a9fb;"></div>
<span class="t" style="left:928.6px;top:107.7px;font-size:16.5px;line-height:18.96px;color:#c8c8c8;transform:scaleX(1.0335);-webkit-text-stroke:0.2px #373737;">PDF</span>
<div style="left:1205.7px;top:115.0px;width:25.9px;height:21.5px;background:#c8c8c8;"></div>
<div style="left:1403.8px;top:130.1px;width:4.7px;height:2.4px;background:#c8c8c8;"></div>
<div style="left:1414.4px;top:138.0px;width:2.4px;height:4.8px;background:#c8c8c8;"></div>
<div style="left:1733.0px;top:109.6px;width:32.0px;height:5.6px;background:#c8c8c8;"></div>
<div style="left:1753.2px;top:111.3px;width:2.0px;height:2.1px;background:#444;"></div>
<div style="left:1757.5px;top:111.3px;width:2.0px;height:2.1px;background:#444;"></div>
<div style="left:1761.7px;top:111.3px;width:2.0px;height:2.1px;background:#444;"></div>
<div style="left:1738.3px;top:119.2px;width:10.9px;height:2.2px;background:#c8c8c8;"></div>
<div style="left:1738.3px;top:123.5px;width:15.1px;height:2.2px;background:#c8c8c8;"></div>
<div style="left:1738.3px;top:127.8px;width:8.5px;height:2.2px;background:#c8c8c8;"></div>
<div style="left:30.5px;top:202.8px;width:7.2px;height:7.5px;background:#f4f4f4;"></div>
<div style="left:689.8px;top:204.2px;width:11.4px;height:8.8px;background:#f4f4f4;"></div>
<div style="left:694.6px;top:206.4px;width:1.8px;height:4.0px;background:#444;"></div>
<div style="left:1472.0px;top:204.8px;width:23.5px;height:4.2px;background:#f4f4f4;"></div>
<div style="left:1549.0px;top:206.5px;width:170.0px;height:2.4px;background:#f4f4f4;"></div>
<div style="left:1772.8px;top:204.8px;width:23.4px;height:4.2px;background:#f4f4f4;"></div>
<div style="left:1991.6px;top:189.2px;width:34.3px;height:2.4px;background:#c8c8c8;"></div>
<div style="left:1991.6px;top:195.6px;width:34.3px;height:2.4px;background:#c8c8c8;"></div>
<div style="left:1991.6px;top:202.3px;width:14.9px;height:2.4px;background:#c8c8c8;"></div>
<div style="left:1991.6px;top:208.7px;width:14.9px;height:2.4px;background:#c8c8c8;"></div>
<div style="left:1991.6px;top:215.2px;width:34.3px;height:2.4px;background:#c8c8c8;"></div>
<div style="left:1991.6px;top:221.7px;width:34.3px;height:2.4px;background:#c8c8c8;"></div>
<div style="left:2261.8px;top:196.1px;width:3.0px;height:3.0px;background:#434343;"></div>
<div style="left:2261.8px;top:205.3px;width:3.0px;height:3.0px;background:#434343;"></div>
<div style="left:2261.8px;top:214.5px;width:3.0px;height:3.0px;background:#434343;"></div>
<div style="left:2271.0px;top:196.1px;width:3.0px;height:3.0px;background:#434343;"></div>
<div style="left:2271.0px;top:205.3px;width:3.0px;height:3.0px;background:#434343;"></div>
<div style="left:2271.0px;top:214.5px;width:3.0px;height:3.0px;background:#434343;"></div>
<div style="left:2280.2px;top:196.1px;width:3.0px;height:3.0px;background:#434343;"></div>
<div style="left:2280.2px;top:205.3px;width:3.0px;height:3.0px;background:#434343;"></div>
<div style="left:2280.2px;top:214.5px;width:3.0px;height:3.0px;background:#434343;"></div>
<div style="left:17.0px;top:1156.7px;width:34.4px;height:34.2px;background:#c8c8c8;"></div>
<div style="left:19.2px;top:1164.0px;width:5.1px;height:5.1px;background:#303030;"></div>
<div style="left:19.2px;top:1174.2px;width:5.1px;height:5.1px;background:#303030;"></div>
<div style="left:19.2px;top:1184.4px;width:5.1px;height:5.1px;background:#303030;"></div>
<div style="left:24.3px;top:1158.9px;width:5.1px;height:5.1px;background:#303030;"></div>
<div style="left:24.3px;top:1169.1px;width:5.1px;height:5.1px;background:#303030;"></div>
<div style="left:24.3px;top:1179.3px;width:5.1px;height:5.1px;background:#303030;"></div>
<div style="left:29.4px;top:1164.0px;width:5.1px;height:5.1px;background:#303030;"></div>
<div style="left:29.4px;top:1174.2px;width:5.1px;height:5.1px;background:#303030;"></div>
<div style="left:29.4px;top:1184.4px;width:5.1px;height:5.1px;background:#303030;"></div>
<div style="left:34.5px;top:1158.9px;width:5.1px;height:5.1px;background:#303030;"></div>
<div style="left:34.5px;top:1169.1px;width:5.1px;height:5.1px;background:#303030;"></div>
<div style="left:34.5px;top:1179.3px;width:5.1px;height:5.1px;background:#303030;"></div>
<div style="left:39.6px;top:1164.0px;width:5.1px;height:5.1px;background:#303030;"></div>
<div style="left:39.6px;top:1174.2px;width:5.1px;height:5.1px;background:#303030;"></div>
<div style="left:39.6px;top:1184.4px;width:5.1px;height:5.1px;background:#303030;"></div>
<div style="left:44.7px;top:1158.9px;width:5.1px;height:5.1px;background:#303030;"></div>
<div style="left:44.7px;top:1169.1px;width:5.1px;height:5.1px;background:#303030;"></div>
<div style="left:44.7px;top:1179.3px;width:5.1px;height:5.1px;background:#303030;"></div>
<div style="left:2700.9px;top:254.5px;width:2.8px;height:1211.5px;background:#050505;"></div>
<div style="left:2703.7px;top:251.4px;width:45.9px;height:1218.6px;background:#2d2d2d;"></div>
<div style="left:2707.3px;top:292.0px;width:41.0px;height:150.4px;background:#464646;"></div>
<div style="left:2707.3px;top:444.6px;width:41.0px;height:273.3px;background:#464646;"></div>
<div style="left:2707.3px;top:720.1px;width:41.0px;height:257.8px;background:#686868;"></div>
<span class="t" style="left:2739.4px;top:343.6px;font-size:27.5px;line-height:27.5px;color:#d2d2d2;-webkit-text-stroke:0.6px #464646;transform-origin:0 0;transform:rotate(90deg) scaleX(0.9289) translateY(-2.4px);">Hints</span>
<span class="t" style="left:2739.4px;top:496.3px;font-size:27.5px;line-height:27.5px;color:#d2d2d2;-webkit-text-stroke:0.6px #464646;transform-origin:0 0;transform:rotate(90deg) scaleX(0.9122) translateY(-2.4px);">Transformations</span>
<span class="t" style="left:2739.4px;top:772.6px;font-size:27.5px;line-height:27.5px;color:#d2d2d2;-webkit-text-stroke:0.6px #686868;transform-origin:0 0;transform:rotate(90deg) scaleX(0.8888) translateY(-2.4px);">Text Properties</span>
<div style="left:2748.2px;top:251.4px;width:2.8px;height:1218.6px;background:#101010;"></div>
<div style="left:2788.2px;top:251.4px;width:2.8px;height:1218.6px;background:#101010;"></div>
<div style="left:2828.9px;top:251.4px;width:2.8px;height:1218.6px;background:#101010;"></div>
<div style="left:2869.5px;top:251.4px;width:2.8px;height:1218.6px;background:#101010;"></div>
<div style="left:2755.3px;top:256.2px;width:2.4px;height:2.4px;background:#6e6e6e;"></div>
<div style="left:2763.8px;top:256.2px;width:2.4px;height:2.4px;background:#6e6e6e;"></div>
<div style="left:2772.3px;top:256.2px;width:2.4px;height:2.4px;background:#6e6e6e;"></div>
<div style="left:2780.8px;top:256.2px;width:2.4px;height:2.4px;background:#6e6e6e;"></div>
<div style="left:2759.6px;top:260.4px;width:2.4px;height:2.4px;background:#6e6e6e;"></div>
<div style="left:2768.1px;top:260.4px;width:2.4px;height:2.4px;background:#6e6e6e;"></div>
<div style="left:2776.6px;top:260.4px;width:2.4px;height:2.4px;background:#6e6e6e;"></div>
<div style="left:2755.3px;top:264.7px;width:2.4px;height:2.4px;background:#6e6e6e;"></div>
<div style="left:2763.8px;top:264.7px;width:2.4px;height:2.4px;background:#6e6e6e;"></div>
<div style="left:2772.3px;top:264.7px;width:2.4px;height:2.4px;background:#6e6e6e;"></div>
<div style="left:2780.8px;top:264.7px;width:2.4px;height:2.4px;background:#6e6e6e;"></div>
<div style="left:2749.5px;top:366.4px;width:39.6px;height:1016.1px;background:#3f3f3f;"></div>
<div style="left:2751.9px;top:368.1px;width:34.8px;height:34.3px;background:#fff;"></div>
<div style="left:2751.9px;top:404.3px;width:34.8px;height:34.3px;background:#231f20;"></div>
<div style="left:2751.9px;top:440.5px;width:34.8px;height:34.3px;background:#414042;"></div>
<div style="left:2751.9px;top:476.7px;width:34.8px;height:34.3px;background:#58595b;"></div>
<div style="left:2751.9px;top:512.9px;width:34.8px;height:34.3px;background:#6d6e71;"></div>
<div style="left:2751.9px;top:549.2px;width:34.8px;height:34.3px;background:#808285;"></div>
<div style="left:2751.9px;top:585.4px;width:34.8px;height:34.3px;background:#939598;"></div>
<div style="left:2751.9px;top:621.6px;width:34.8px;height:34.3px;background:#a7a9ac;"></div>
<div style="left:2751.9px;top:657.8px;width:34.8px;height:34.3px;background:#bcbec0;"></div>
<div style="left:2751.9px;top:694.0px;width:34.8px;height:34.3px;background:#d1d3d4;"></div>
<div style="left:2751.9px;top:730.2px;width:34.8px;height:34.3px;background:#e6e7e8;"></div>
<div style="left:2751.9px;top:766.4px;width:34.8px;height:34.3px;background:#ffffff;"></div>
<div style="left:2751.9px;top:802.6px;width:34.8px;height:34.3px;background:#2e3192;"></div>
<div style="left:2751.9px;top:838.8px;width:34.8px;height:34.3px;background:#00aeef;"></div>
<div style="left:2751.9px;top:875.0px;width:34.8px;height:34.3px;background:#00a651;"></div>
<div style="left:2751.9px;top:911.2px;width:34.8px;height:34.3px;background:#fff200;"></div>
<div style="left:2751.9px;top:947.5px;width:34.8px;height:34.3px;background:#ed1c24;"></div>
<div style="left:2751.9px;top:983.7px;width:34.8px;height:34.3px;background:#ec008c;"></div>
<div style="left:2751.9px;top:1019.9px;width:34.8px;height:34.3px;background:#a54a8b;"></div>
<div style="left:2751.9px;top:1056.1px;width:34.8px;height:34.3px;background:#f58220;"></div>
<div style="left:2751.9px;top:1092.3px;width:34.8px;height:34.3px;background:#f8aeac;"></div>
<div style="left:2751.9px;top:1128.5px;width:34.8px;height:34.3px;background:#7f6c66;"></div>
<div style="left:2751.9px;top:1164.7px;width:34.8px;height:34.3px;background:#c8c5e2;"></div>
<div style="left:2751.9px;top:1200.9px;width:34.8px;height:34.3px;background:#9b95c9;"></div>
<div style="left:2751.9px;top:1237.1px;width:34.8px;height:34.3px;background:#6d8cc8;"></div>
<div style="left:2751.9px;top:1273.3px;width:34.8px;height:34.3px;background:#7772b4;"></div>
<div style="left:2751.9px;top:1309.6px;width:34.8px;height:34.3px;background:#8780ad;"></div>
<div style="left:2751.9px;top:1345.8px;width:34.8px;height:34.3px;background:#46608c;"></div>
<div style="left:2795.8px;top:256.2px;width:2.4px;height:2.4px;background:#6e6e6e;"></div>
<div style="left:2804.3px;top:256.2px;width:2.4px;height:2.4px;background:#6e6e6e;"></div>
<div style="left:2812.8px;top:256.2px;width:2.4px;height:2.4px;background:#6e6e6e;"></div>
<div style="left:2821.3px;top:256.2px;width:2.4px;height:2.4px;background:#6e6e6e;"></div>
<div style="left:2800.1px;top:260.4px;width:2.4px;height:2.4px;background:#6e6e6e;"></div>
<div style="left:2808.6px;top:260.4px;width:2.4px;height:2.4px;background:#6e6e6e;"></div>
<div style="left:2817.1px;top:260.4px;width:2.4px;height:2.4px;background:#6e6e6e;"></div>
<div style="left:2795.8px;top:264.7px;width:2.4px;height:2.4px;background:#6e6e6e;"></div>
<div style="left:2804.3px;top:264.7px;width:2.4px;height:2.4px;background:#6e6e6e;"></div>
<div style="left:2812.8px;top:264.7px;width:2.4px;height:2.4px;background:#6e6e6e;"></div>
<div style="left:2821.3px;top:264.7px;width:2.4px;height:2.4px;background:#6e6e6e;"></div>
<div style="left:2790.1px;top:366.4px;width:39.5px;height:1016.1px;background:#3f3f3f;"></div>
<div style="left:2792.5px;top:368.1px;width:34.7px;height:34.3px;background:#fff;"></div>
<div style="left:2792.5px;top:404.3px;width:34.7px;height:34.3px;background:#000000;"></div>
<div style="left:2792.5px;top:440.5px;width:34.7px;height:34.3px;background:#1a1a1a;"></div>
<div style="left:2792.5px;top:476.7px;width:34.7px;height:34.3px;background:#333333;"></div>
<div style="left:2792.5px;top:512.9px;width:34.7px;height:34.3px;background:#4d4d4d;"></div>
<div style="left:2792.5px;top:549.2px;width:34.7px;height:34.3px;background:#666666;"></div>
<div style="left:2792.5px;top:585.4px;width:34.7px;height:34.3px;background:#808080;"></div>
<div style="left:2792.5px;top:621.6px;width:34.7px;height:34.3px;background:#999999;"></div>
<div style="left:2792.5px;top:657.8px;width:34.7px;height:34.3px;background:#b3b3b3;"></div>
<div style="left:2792.5px;top:694.0px;width:34.7px;height:34.3px;background:#cccccc;"></div>
<div style="left:2792.5px;top:730.2px;width:34.7px;height:34.3px;background:#e6e6e6;"></div>
<div style="left:2792.5px;top:766.4px;width:34.7px;height:34.3px;background:#ffffff;"></div>
<div style="left:2792.5px;top:802.6px;width:34.7px;height:34.3px;background:#0000ff;"></div>
<div style="left:2792.5px;top:838.8px;width:34.7px;height:34.3px;background:#00ffff;"></div>
<div style="left:2792.5px;top:875.0px;width:34.7px;height:34.3px;background:#00ff00;"></div>
<div style="left:2792.5px;top:911.2px;width:34.7px;height:34.3px;background:#ffff00;"></div>
<div style="left:2792.5px;top:947.5px;width:34.7px;height:34.3px;background:#ff0000;"></div>
<div style="left:2792.5px;top:983.7px;width:34.7px;height:34.3px;background:#ff00ff;"></div>
<div style="left:2792.5px;top:1019.9px;width:34.7px;height:34.3px;background:#9900cc;"></div>
<div style="left:2792.5px;top:1056.1px;width:34.7px;height:34.3px;background:#ff6600;"></div>
<div style="left:2792.5px;top:1092.3px;width:34.7px;height:34.3px;background:#ff99cc;"></div>
<div style="left:2792.5px;top:1128.5px;width:34.7px;height:34.3px;background:#663333;"></div>
<div style="left:2792.5px;top:1164.7px;width:34.7px;height:34.3px;background:#ccccff;"></div>
<div style="left:2792.5px;top:1200.9px;width:34.7px;height:34.3px;background:#9999ff;"></div>
<div style="left:2792.5px;top:1237.1px;width:34.7px;height:34.3px;background:#6699ff;"></div>
<div style="left:2792.5px;top:1273.3px;width:34.7px;height:34.3px;background:#6666ff;"></div>
<div style="left:2792.5px;top:1309.6px;width:34.7px;height:34.3px;background:#6666cc;"></div>
<div style="left:2792.5px;top:1345.8px;width:34.7px;height:34.3px;background:#003399;"></div>
<div style="left:2836.4px;top:256.2px;width:2.4px;height:2.4px;background:#6e6e6e;"></div>
<div style="left:2844.9px;top:256.2px;width:2.4px;height:2.4px;background:#6e6e6e;"></div>
<div style="left:2853.4px;top:256.2px;width:2.4px;height:2.4px;background:#6e6e6e;"></div>
<div style="left:2861.9px;top:256.2px;width:2.4px;height:2.4px;background:#6e6e6e;"></div>
<div style="left:2840.6px;top:260.4px;width:2.4px;height:2.4px;background:#6e6e6e;"></div>
<div style="left:2849.1px;top:260.4px;width:2.4px;height:2.4px;background:#6e6e6e;"></div>
<div style="left:2857.6px;top:260.4px;width:2.4px;height:2.4px;background:#6e6e6e;"></div>
<div style="left:2836.4px;top:264.7px;width:2.4px;height:2.4px;background:#6e6e6e;"></div>
<div style="left:2844.9px;top:264.7px;width:2.4px;height:2.4px;background:#6e6e6e;"></div>
<div style="left:2853.4px;top:264.7px;width:2.4px;height:2.4px;background:#6e6e6e;"></div>
<div style="left:2861.9px;top:264.7px;width:2.4px;height:2.4px;background:#6e6e6e;"></div>
<div style="left:2830.8px;top:366.4px;width:39.2px;height:1016.1px;background:#3f3f3f;"></div>
<div style="left:2833.2px;top:368.1px;width:34.4px;height:34.3px;background:#fff;"></div>
<div style="left:2833.2px;top:404.3px;width:34.4px;height:34.3px;background:#f3f0dc;"></div>
<div style="left:2836.4px;top:426.4px;width:9.4px;height:9.4px;background:#8a8a8a;"></div>
<div style="left:2838.4px;top:428.4px;width:5.4px;height:5.4px;background:#f4f4f4;"></div>
<div style="left:2840.0px;top:430.0px;width:2.2px;height:2.2px;background:#555;"></div>
<div style="left:2833.2px;top:440.5px;width:34.4px;height:34.3px;background:#f4edb4;"></div>
<div style="left:2836.4px;top:462.6px;width:9.4px;height:9.4px;background:#8a8a8a;"></div>
<div style="left:2838.4px;top:464.6px;width:5.4px;height:5.4px;background:#f4f4f4;"></div>
<div style="left:2840.0px;top:466.2px;width:2.2px;height:2.2px;background:#555;"></div>
<div style="left:2833.2px;top:476.7px;width:34.4px;height:34.3px;background:#f7ec88;"></div>
<div style="left:2836.4px;top:498.8px;width:9.4px;height:9.4px;background:#8a8a8a;"></div>
<div style="left:2838.4px;top:500.8px;width:5.4px;height:5.4px;background:#f4f4f4;"></div>
<div style="left:2840.0px;top:502.4px;width:2.2px;height:2.2px;background:#555;"></div>
<div style="left:2833.2px;top:512.9px;width:34.4px;height:34.3px;background:#f9ec5e;"></div>
<div style="left:2836.4px;top:535.1px;width:9.4px;height:9.4px;background:#8a8a8a;"></div>
<div style="left:2838.4px;top:537.1px;width:5.4px;height:5.4px;background:#f4f4f4;"></div>
<div style="left:2840.0px;top:538.7px;width:2.2px;height:2.2px;background:#555;"></div>
<div style="left:2833.2px;top:549.2px;width:34.4px;height:34.3px;background:#fbe920;"></div>
<div style="left:2836.4px;top:571.3px;width:9.4px;height:9.4px;background:#8a8a8a;"></div>
<div style="left:2838.4px;top:573.3px;width:5.4px;height:5.4px;background:#f4f4f4;"></div>
<div style="left:2840.0px;top:574.9px;width:2.2px;height:2.2px;background:#555;"></div>
<div style="left:2833.2px;top:585.4px;width:34.4px;height:34.3px;background:#ffe500;"></div>
<div style="left:2836.4px;top:607.5px;width:9.4px;height:9.4px;background:#8a8a8a;"></div>
<div style="left:2838.4px;top:609.5px;width:5.4px;height:5.4px;background:#f4f4f4;"></div>
<div style="left:2840.0px;top:611.1px;width:2.2px;height:2.2px;background:#555;"></div>
<div style="left:2833.2px;top:621.6px;width:34.4px;height:34.3px;background:#fedc00;"></div>
<div style="left:2836.4px;top:643.7px;width:9.4px;height:9.4px;background:#8a8a8a;"></div>
<div style="left:2838.4px;top:645.7px;width:5.4px;height:5.4px;background:#f4f4f4;"></div>
<div style="left:2840.0px;top:647.3px;width:2.2px;height:2.2px;background:#555;"></div>
<div style="left:2833.2px;top:657.8px;width:34.4px;height:34.3px;background:#eee8c1;"></div>
<div style="left:2836.4px;top:679.9px;width:9.4px;height:9.4px;background:#8a8a8a;"></div>
<div style="left:2838.4px;top:681.9px;width:5.4px;height:5.4px;background:#f4f4f4;"></div>
<div style="left:2840.0px;top:683.5px;width:2.2px;height:2.2px;background:#555;"></div>
<div style="left:2833.2px;top:694.0px;width:34.4px;height:34.3px;background:#efe6a4;"></div>
<div style="left:2836.4px;top:716.1px;width:9.4px;height:9.4px;background:#8a8a8a;"></div>
<div style="left:2838.4px;top:718.1px;width:5.4px;height:5.4px;background:#f4f4f4;"></div>
<div style="left:2840.0px;top:719.7px;width:2.2px;height:2.2px;background:#555;"></div>
<div style="left:2833.2px;top:730.2px;width:34.4px;height:34.3px;background:#eade7c;"></div>
<div style="left:2836.4px;top:752.3px;width:9.4px;height:9.4px;background:#8a8a8a;"></div>
<div style="left:2838.4px;top:754.3px;width:5.4px;height:5.4px;background:#f4f4f4;"></div>
<div style="left:2840.0px;top:755.9px;width:2.2px;height:2.2px;background:#555;"></div>
<div style="left:2833.2px;top:766.4px;width:34.4px;height:34.3px;background:#e4d44e;"></div>
<div style="left:2836.4px;top:788.5px;width:9.4px;height:9.4px;background:#8a8a8a;"></div>
<div style="left:2838.4px;top:790.5px;width:5.4px;height:5.4px;background:#f4f4f4;"></div>
<div style="left:2840.0px;top:792.1px;width:2.2px;height:2.2px;background:#555;"></div>
<div style="left:2833.2px;top:802.6px;width:34.4px;height:34.3px;background:#dcc61e;"></div>
<div style="left:2836.4px;top:824.7px;width:9.4px;height:9.4px;background:#8a8a8a;"></div>
<div style="left:2838.4px;top:826.7px;width:5.4px;height:5.4px;background:#f4f4f4;"></div>
<div style="left:2840.0px;top:828.3px;width:2.2px;height:2.2px;background:#555;"></div>
<div style="left:2833.2px;top:838.8px;width:34.4px;height:34.3px;background:#d0b404;"></div>
<div style="left:2836.4px;top:860.9px;width:9.4px;height:9.4px;background:#8a8a8a;"></div>
<div style="left:2838.4px;top:862.9px;width:5.4px;height:5.4px;background:#f4f4f4;"></div>
<div style="left:2840.0px;top:864.5px;width:2.2px;height:2.2px;background:#555;"></div>
<div style="left:2833.2px;top:875.0px;width:34.4px;height:34.3px;background:#b89c06;"></div>
<div style="left:2836.4px;top:897.1px;width:9.4px;height:9.4px;background:#8a8a8a;"></div>
<div style="left:2838.4px;top:899.1px;width:5.4px;height:5.4px;background:#f4f4f4;"></div>
<div style="left:2840.0px;top:900.8px;width:2.2px;height:2.2px;background:#555;"></div>
<div style="left:2833.2px;top:911.2px;width:34.4px;height:34.3px;background:#ece1ad;"></div>
<div style="left:2836.4px;top:933.4px;width:9.4px;height:9.4px;background:#8a8a8a;"></div>
<div style="left:2838.4px;top:935.4px;width:5.4px;height:5.4px;background:#f4f4f4;"></div>
<div style="left:2840.0px;top:937.0px;width:2.2px;height:2.2px;background:#555;"></div>
<div style="left:2833.2px;top:947.5px;width:34.4px;height:34.3px;background:#e1d388;"></div>
<div style="left:2836.4px;top:969.6px;width:9.4px;height:9.4px;background:#8a8a8a;"></div>
<div style="left:2838.4px;top:971.6px;width:5.4px;height:5.4px;background:#f4f4f4;"></div>
<div style="left:2840.0px;top:973.2px;width:2.2px;height:2.2px;background:#555;"></div>
<div style="left:2833.2px;top:983.7px;width:34.4px;height:34.3px;background:#cfbd54;"></div>
<div style="left:2836.4px;top:1005.8px;width:9.4px;height:9.4px;background:#8a8a8a;"></div>
<div style="left:2838.4px;top:1007.8px;width:5.4px;height:5.4px;background:#f4f4f4;"></div>
<div style="left:2840.0px;top:1009.4px;width:2.2px;height:2.2px;background:#555;"></div>
<div style="left:2833.2px;top:1019.9px;width:34.4px;height:34.3px;background:#bcab22;"></div>
<div style="left:2836.4px;top:1042.0px;width:9.4px;height:9.4px;background:#8a8a8a;"></div>
<div style="left:2838.4px;top:1044.0px;width:5.4px;height:5.4px;background:#f4f4f4;"></div>
<div style="left:2840.0px;top:1045.6px;width:2.2px;height:2.2px;background:#555;"></div>
<div style="left:2833.2px;top:1056.1px;width:34.4px;height:34.3px;background:#ad9606;"></div>
<div style="left:2836.4px;top:1078.2px;width:9.4px;height:9.4px;background:#8a8a8a;"></div>
<div style="left:2838.4px;top:1080.2px;width:5.4px;height:5.4px;background:#f4f4f4;"></div>
<div style="left:2840.0px;top:1081.8px;width:2.2px;height:2.2px;background:#555;"></div>
<div style="left:2833.2px;top:1092.3px;width:34.4px;height:34.3px;background:#9b7f06;"></div>
<div style="left:2836.4px;top:1114.4px;width:9.4px;height:9.4px;background:#8a8a8a;"></div>
<div style="left:2838.4px;top:1116.4px;width:5.4px;height:5.4px;background:#f4f4f4;"></div>
<div style="left:2840.0px;top:1118.0px;width:2.2px;height:2.2px;background:#555;"></div>
<div style="left:2833.2px;top:1128.5px;width:34.4px;height:34.3px;background:#856b06;"></div>
<div style="left:2836.4px;top:1150.6px;width:9.4px;height:9.4px;background:#8a8a8a;"></div>
<div style="left:2838.4px;top:1152.6px;width:5.4px;height:5.4px;background:#f4f4f4;"></div>
<div style="left:2840.0px;top:1154.2px;width:2.2px;height:2.2px;background:#555;"></div>
<div style="left:2833.2px;top:1164.7px;width:34.4px;height:34.3px;background:#f1eada;"></div>
<div style="left:2836.4px;top:1186.8px;width:9.4px;height:9.4px;background:#8a8a8a;"></div>
<div style="left:2838.4px;top:1188.8px;width:5.4px;height:5.4px;background:#f4f4f4;"></div>
<div style="left:2840.0px;top:1190.4px;width:2.2px;height:2.2px;background:#555;"></div>
<div style="left:2833.2px;top:1200.9px;width:34.4px;height:34.3px;background:#d5cc9e;"></div>
<div style="left:2836.4px;top:1223.0px;width:9.4px;height:9.4px;background:#8a8a8a;"></div>
<div style="left:2838.4px;top:1225.0px;width:5.4px;height:5.4px;background:#f4f4f4;"></div>
<div style="left:2840.0px;top:1226.6px;width:2.2px;height:2.2px;background:#555;"></div>
<div style="left:2833.2px;top:1237.1px;width:34.4px;height:34.3px;background:#c0b26f;"></div>
<div style="left:2836.4px;top:1259.2px;width:9.4px;height:9.4px;background:#8a8a8a;"></div>
<div style="left:2838.4px;top:1261.2px;width:5.4px;height:5.4px;background:#f4f4f4;"></div>
<div style="left:2840.0px;top:1262.8px;width:2.2px;height:2.2px;background:#555;"></div>
<div style="left:2833.2px;top:1273.3px;width:34.4px;height:34.3px;background:#a49444;"></div>
<div style="left:2836.4px;top:1295.5px;width:9.4px;height:9.4px;background:#8a8a8a;"></div>
<div style="left:2838.4px;top:1297.5px;width:5.4px;height:5.4px;background:#f4f4f4;"></div>
<div style="left:2840.0px;top:1299.1px;width:2.2px;height:2.2px;background:#555;"></div>
<div style="left:2833.2px;top:1309.6px;width:34.4px;height:34.3px;background:#8c7a22;"></div>
<div style="left:2836.4px;top:1331.7px;width:9.4px;height:9.4px;background:#8a8a8a;"></div>
<div style="left:2838.4px;top:1333.7px;width:5.4px;height:5.4px;background:#f4f4f4;"></div>
<div style="left:2840.0px;top:1335.3px;width:2.2px;height:2.2px;background:#555;"></div>
<div style="left:2833.2px;top:1345.8px;width:34.4px;height:34.3px;background:#7b6616;"></div>
<div style="left:2836.4px;top:1367.9px;width:9.4px;height:9.4px;background:#8a8a8a;"></div>
<div style="left:2838.4px;top:1369.9px;width:5.4px;height:5.4px;background:#f4f4f4;"></div>
<div style="left:2840.0px;top:1371.5px;width:2.2px;height:2.2px;background:#555;"></div>
<div style="left:2877.6px;top:256.2px;width:2.4px;height:2.4px;background:#6e6e6e;"></div>
<div style="left:2886.1px;top:256.2px;width:2.4px;height:2.4px;background:#6e6e6e;"></div>
<div style="left:2894.6px;top:256.2px;width:2.4px;height:2.4px;background:#6e6e6e;"></div>
<div style="left:2903.1px;top:256.2px;width:2.4px;height:2.4px;background:#6e6e6e;"></div>
<div style="left:2881.8px;top:260.4px;width:2.4px;height:2.4px;background:#6e6e6e;"></div>
<div style="left:2890.3px;top:260.4px;width:2.4px;height:2.4px;background:#6e6e6e;"></div>
<div style="left:2898.8px;top:260.4px;width:2.4px;height:2.4px;background:#6e6e6e;"></div>
<div style="left:2877.6px;top:264.7px;width:2.4px;height:2.4px;background:#6e6e6e;"></div>
<div style="left:2886.1px;top:264.7px;width:2.4px;height:2.4px;background:#6e6e6e;"></div>
<div style="left:2894.6px;top:264.7px;width:2.4px;height:2.4px;background:#6e6e6e;"></div>
<div style="left:2903.1px;top:264.7px;width:2.4px;height:2.4px;background:#6e6e6e;"></div>
<div style="left:2871.3px;top:366.4px;width:38.9px;height:1016.1px;background:#3f3f3f;"></div>
<div style="left:2873.7px;top:368.1px;width:34.1px;height:34.3px;background:#fff;"></div>
<div style="left:2873.7px;top:404.3px;width:34.1px;height:34.3px;background:#ee3968;"></div>
<div style="left:2873.7px;top:440.5px;width:34.1px;height:34.3px;background:#f0607c;"></div>
<div style="left:2873.7px;top:476.7px;width:34.1px;height:34.3px;background:#f27b8d;"></div>
<div style="left:2873.7px;top:512.9px;width:34.1px;height:34.3px;background:#f497a3;"></div>
<div style="left:2873.7px;top:549.2px;width:34.1px;height:34.3px;background:#f8b3b6;"></div>
<div style="left:2873.7px;top:585.4px;width:34.1px;height:34.3px;background:#fccdce;"></div>
<div style="left:2873.7px;top:621.6px;width:34.1px;height:34.3px;background:#fde8e8;"></div>
<div style="left:2873.7px;top:657.8px;width:34.1px;height:34.3px;background:#fdf1f0;"></div>
<div style="left:2873.7px;top:694.0px;width:34.1px;height:34.3px;background:#df3860;"></div>
<div style="left:2873.7px;top:730.2px;width:34.1px;height:34.3px;background:#e15b74;"></div>
<div style="left:2873.7px;top:766.4px;width:34.1px;height:34.3px;background:#e37486;"></div>
<div style="left:2873.7px;top:802.6px;width:34.1px;height:34.3px;background:#e88b98;"></div>
<div style="left:2873.7px;top:838.8px;width:34.1px;height:34.3px;background:#ebaab1;"></div>
<div style="left:2873.7px;top:875.0px;width:34.1px;height:34.3px;background:#edc4c7;"></div>
<div style="left:2873.7px;top:911.2px;width:34.1px;height:34.3px;background:#b86f79;"></div>
<div style="left:2873.7px;top:947.5px;width:34.1px;height:34.3px;background:#bc868d;"></div>
<div style="left:2873.7px;top:983.7px;width:34.1px;height:34.3px;background:#d83a60;"></div>
<div style="left:2873.7px;top:1019.9px;width:34.1px;height:34.3px;background:#da5a72;"></div>
<div style="left:2873.7px;top:1056.1px;width:34.1px;height:34.3px;background:#db7384;"></div>
<div style="left:2873.7px;top:1092.3px;width:34.1px;height:34.3px;background:#dd8a96;"></div>
<div style="left:2873.7px;top:1128.5px;width:34.1px;height:34.3px;background:#dfa2aa;"></div>
<div style="left:2873.7px;top:1164.7px;width:34.1px;height:34.3px;background:#b02a50;"></div>
<div style="left:2873.7px;top:1200.9px;width:34.1px;height:34.3px;background:#b3495f;"></div>
<div style="left:2873.7px;top:1237.1px;width:34.1px;height:34.3px;background:#b65e6f;"></div>
<div style="left:2873.7px;top:1273.3px;width:34.1px;height:34.3px;background:#c9305c;"></div>
<div style="left:2873.7px;top:1309.6px;width:34.1px;height:34.3px;background:#cf566e;"></div>
<div style="left:2873.7px;top:1345.8px;width:34.1px;height:34.3px;background:#cf6e80;"></div>
<div style="left:107.0px;top:1393.4px;width:1295.0px;height:36.1px;background:#373737;"></div>
<div style="left:107.0px;top:1393.2px;width:1295.0px;height:2.2px;background:#b4b4b4;"></div>
<div style="left:418.4px;top:1393.0px;width:128.1px;height:34.6px;background:#5b5b5b;clip-path:polygon(0 0,100% 0,91.7% 100%,8.5% 100%);"></div>
<span class="t" style="left:444.3px;top:1394.7px;font-size:26.5px;line-height:30.45px;color:#d2d2d2;transform:scaleX(0.8537);-webkit-text-stroke:0.55px #5b5b5b;">Page 1</span>
<span class="t" style="left:216.4px;top:1396.6px;font-size:27px;line-height:31.02px;color:#d2d2d2;transform:scaleX(0.8058);-webkit-text-stroke:0.55px #373737;">1</span>
<span class="t" style="left:241.5px;top:1396.6px;font-size:27px;line-height:31.02px;color:#d2d2d2;transform:scaleX(0.9771);-webkit-text-stroke:0.55px #373737;">of</span>
<span class="t" style="left:276.0px;top:1396.6px;font-size:27px;line-height:31.02px;color:#d2d2d2;transform:scaleX(0.8125);-webkit-text-stroke:0.55px #373737;">1</span>
<div style="left:148.0px;top:1402.5px;width:2.4px;height:19.5px;background:#4a4a4a;"></div>
<div style="left:356.4px;top:1402.5px;width:2.4px;height:19.5px;background:#4a4a4a;"></div>
<div style="left:1386.6px;top:1399.3px;width:2.4px;height:2.4px;background:#747474;"></div>
<div style="left:1395.2px;top:1399.3px;width:2.4px;height:2.4px;background:#747474;"></div>
<div style="left:1391.0px;top:1403.6px;width:2.4px;height:2.4px;background:#747474;"></div>
<div style="left:1386.6px;top:1407.9px;width:2.4px;height:2.4px;background:#747474;"></div>
<div style="left:1395.2px;top:1407.9px;width:2.4px;height:2.4px;background:#747474;"></div>
<div style="left:1391.0px;top:1412.2px;width:2.4px;height:2.4px;background:#747474;"></div>
<div style="left:1386.6px;top:1416.5px;width:2.4px;height:2.4px;background:#747474;"></div>
<div style="left:1395.2px;top:1416.5px;width:2.4px;height:2.4px;background:#747474;"></div>
<div style="left:1391.0px;top:1420.8px;width:2.4px;height:2.4px;background:#747474;"></div>
<div style="left:1402.0px;top:1393.4px;width:1259.0px;height:36.1px;background:#5b5b5b;"></div>
<div style="left:1402.0px;top:1395.0px;width:38.0px;height:34.5px;background:#f0f0f0;"></div>
<div style="left:1661.4px;top:1395.4px;width:298.1px;height:34.1px;background:#cdcdcd;"></div>
<div style="left:2624.5px;top:1395.0px;width:36.5px;height:34.5px;background:#f0f0f0;"></div>
<div style="left:2661.0px;top:1393.4px;width:36.2px;height:36.1px;background:#5b5b5b;"></div>
<div style="left:68.3px;top:1429.3px;width:2629.1px;height:2.3px;background:#0c0c0c;"></div>
<div style="left:0.0px;top:1469.3px;width:2910.0px;height:2.3px;background:#0c0c0c;"></div>
<div style="left:72.1px;top:1435.5px;width:2.4px;height:2.4px;background:#747474;"></div>
<div style="left:80.7px;top:1435.5px;width:2.4px;height:2.4px;background:#747474;"></div>
<div style="left:76.5px;top:1439.8px;width:2.4px;height:2.4px;background:#747474;"></div>
<div style="left:72.1px;top:1444.0px;width:2.4px;height:2.4px;background:#747474;"></div>
<div style="left:80.7px;top:1444.0px;width:2.4px;height:2.4px;background:#747474;"></div>
<div style="left:76.5px;top:1448.3px;width:2.4px;height:2.4px;background:#747474;"></div>
<div style="left:72.1px;top:1452.6px;width:2.4px;height:2.4px;background:#747474;"></div>
<div style="left:80.7px;top:1452.6px;width:2.4px;height:2.4px;background:#747474;"></div>
<div style="left:76.5px;top:1456.8px;width:2.4px;height:2.4px;background:#747474;"></div>
<div style="left:72.1px;top:1461.1px;width:2.4px;height:2.4px;background:#747474;"></div>
<div style="left:80.7px;top:1461.1px;width:2.4px;height:2.4px;background:#747474;"></div>
<div style="left:184.3px;top:1432.6px;width:73.0px;height:36.1px;background:#6a6a6a;"></div>
<div style="left:185.8px;top:1434.0px;width:33.9px;height:33.3px;background:#fff;"></div>
<div style="left:221.6px;top:1434.0px;width:34.2px;height:33.3px;background:#000;"></div>
<span class="t" style="left:16.0px;top:1496.6px;font-size:26.5px;line-height:30.45px;color:#d2d2d2;transform:scaleX(0.8645);-webkit-text-stroke:0.55px #373737;">( 66.904, 104.148 )</span>
<span class="t" style="left:350.3px;top:1496.6px;font-size:26.5px;line-height:30.45px;color:#d2d2d2;transform:scaleX(0.9081);-webkit-text-stroke:0.55px #373737;">Curve on Layer 1</span>
<span class="t" style="left:2103.2px;top:1494.7px;font-size:26.5px;line-height:30.45px;color:#d2d2d2;transform:scaleX(0.9692);-webkit-text-stroke:0.55px #373737;">None</span>
<span class="t" style="left:2544.3px;top:1494.7px;font-size:26.5px;line-height:30.45px;color:#d2d2d2;transform:scaleX(0.8652);-webkit-text-stroke:0.55px #373737;">R:0 G:0 B:0 (#000000)</span>
<span class="t" style="left:2789.5px;top:1494.7px;font-size:26.5px;line-height:30.45px;color:#d2d2d2;transform:scaleX(0.9606);-webkit-text-stroke:0.55px #373737;">Hairline</span>
<div style="left:2428.4px;top:1486.0px;width:2.4px;height:46.5px;background:#0c0c0c;"></div>
<div style="left:2047.2px;top:1486.3px;width:47.2px;height:47.2px;background:#6a6a6a;"></div>
<div style="left:2049.4px;top:1488.5px;width:42.8px;height:42.8px;background:#fff;"></div>
<div style="left:2487.9px;top:1486.3px;width:47.2px;height:47.2px;background:#5a5a5a;"></div>
<div style="left:2490.1px;top:1488.5px;width:42.8px;height:42.8px;background:#000;"></div>
<div style="left:0.0px;top:1550.6px;width:2910.0px;height:85.4px;background:#000;"></div>
<div style="left:102.0px;top:1550.6px;width:733.4px;height:85.4px;background:#383838;"></div>
<span class="t" style="left:179.5px;top:1575.9px;font-size:33px;line-height:37.92px;color:#a6a6a6;transform:scaleX(0.9285);-webkit-text-stroke:0.55px #383838;">Type here to search</span>
<div style="left:1056.5px;top:1631.5px;width:84.5px;height:4.5px;background:#76b9ed;"></div>
<div style="left:1257.0px;top:1550.6px;width:102.0px;height:85.4px;background:#373737;"></div>
<div style="left:1257.0px;top:1631.5px;width:102.0px;height:4.5px;background:#76b9ed;"></div>
<div style="left:1579.0px;top:1631.5px;width:84.4px;height:4.5px;background:#76b9ed;"></div>
<div style="left:1682.8px;top:1631.5px;width:85.0px;height:4.5px;background:#76b9ed;"></div>
<div style="left:2529.5px;top:1588.0px;width:10.5px;height:11.0px;background:#fff;"></div>
<div style="left:2550.5px;top:1590.0px;width:2.5px;height:7.0px;background:#fff;"></div>
<span class="t" style="left:2684.3px;top:1559.3px;font-size:25.5px;line-height:29.30px;color:#fff;transform:scaleX(0.9340);-webkit-text-stroke:0.55px #000;">4:01 PM</span>
<span class="t" style="left:2680.4px;top:1598.0px;font-size:25.5px;line-height:29.30px;color:#fff;transform:scaleX(0.9771);-webkit-text-stroke:0.55px #000;">2/1/2018</span>
<div style="left:2899.5px;top:1550.6px;width:1.5px;height:85.4px;background:#4a4a4a;"></div>
</div>
<svg id="o" width="2910" height="1636" viewBox="0 0 2910 1636">
<path d="M1267.7 637.0 C1267.7 488.8 1387.8 368.7 1536.0 368.7 C1684.2 368.7 1804.3 488.8 1804.3 637.0 L1804.3 1101.4 C1804.3 1241.1 1684.2 1354.3 1536.0 1354.3 C1381.9 1354.3 1267.7 1239.3 1267.7 1071.2 C1267.7 925 1352 834.3 1469.9 811.5 L1636 779.4 L1636 637.0 C1636 580.9 1592.1 535.5 1536.0 535.5 C1479.9 535.5 1434.5 580.9 1434.5 637.0Z M1636 952.1 L1502 977.3 C1458 986 1433.5 1024 1433.5 1071.2 C1433.5 1135 1479 1186.5 1535.7 1186.5 C1592 1186.5 1636 1135 1636 1073.2Z" fill="none" stroke="#111" stroke-width="1.7"/>
<rect x="1532.1" y="365.4" width="7.2" height="7.2" fill="#fff" stroke="#111" stroke-width="1.7"/>
<rect x="1340.6" y="443.2" width="7.2" height="7.2" fill="#fff" stroke="#111" stroke-width="1.7"/>
<rect x="1719.2" y="443.2" width="7.2" height="7.2" fill="#fff" stroke="#111" stroke-width="1.7"/>
<rect x="1264.1" y="633.4" width="7.2" height="7.2" fill="#fff" stroke="#111" stroke-width="1.7"/>
<rect x="1429.9" y="633.4" width="7.2" height="7.2" fill="#fff" stroke="#111" stroke-width="1.7"/>
<rect x="1532.1" y="532.9" width="7.2" height="7.2" fill="#fff" stroke="#111" stroke-width="1.7"/>
<rect x="1460.5" y="563.1" width="7.2" height="7.2" fill="#fff" stroke="#111" stroke-width="1.7"/>
<rect x="1602.0" y="562.7" width="7.2" height="7.2" fill="#fff" stroke="#111" stroke-width="1.7"/>
<rect x="1632.6" y="633.4" width="7.2" height="7.2" fill="#fff" stroke="#111" stroke-width="1.7"/>
<rect x="1800.8" y="633.4" width="7.2" height="7.2" fill="#fff" stroke="#111" stroke-width="1.7"/>
<rect x="1466.3" y="807.9" width="7.2" height="7.2" fill="#fff" stroke="#111" stroke-width="1.7"/>
<rect x="1632.2" y="948.5" width="7.2" height="7.2" fill="#fff" stroke="#111" stroke-width="1.7"/>
<rect x="1498.4" y="973.7" width="7.2" height="7.2" fill="#fff" stroke="#111" stroke-width="1.7"/>
<rect x="1429.6" y="1067.6" width="7.2" height="7.2" fill="#fff" stroke="#111" stroke-width="1.7"/>
<rect x="1264.1" y="1067.6" width="7.2" height="7.2" fill="#fff" stroke="#111" stroke-width="1.7"/>
<rect x="1800.8" y="1097.8" width="7.2" height="7.2" fill="#fff" stroke="#111" stroke-width="1.7"/>
<rect x="1459.4" y="1153.1" width="7.2" height="7.2" fill="#fff" stroke="#111" stroke-width="1.7"/>
<rect x="1603.2" y="1153.5" width="7.2" height="7.2" fill="#fff" stroke="#111" stroke-width="1.7"/>
<rect x="1532.1" y="1182.9" width="7.2" height="7.2" fill="#fff" stroke="#111" stroke-width="1.7"/>
<rect x="1340.3" y="1272.2" width="7.2" height="7.2" fill="#fff" stroke="#111" stroke-width="1.7"/>
<rect x="1685.6" y="1302.0" width="7.2" height="7.2" fill="#fff" stroke="#111" stroke-width="1.7"/>
<rect x="1532.1" y="1350.7" width="7.2" height="7.2" fill="#fff" stroke="#111" stroke-width="1.7"/>
<rect x="1630.5" y="773.6" width="10.6" height="11.6" fill="#fff" stroke="#111" stroke-width="1.7"/>
<rect x="1630.5" y="1067.4" width="10.6" height="11.6" fill="#fff" stroke="#111" stroke-width="1.7"/>
<rect x="1246.2" y="347.3" width="17" height="17" fill="#000"/>
<rect x="1246.2" y="851.9" width="17" height="17" fill="#000"/>
<rect x="1246.2" y="1359.0" width="17" height="17" fill="#000"/>
<rect x="1527.5" y="347.3" width="17" height="17" fill="#000"/>
<rect x="1527.5" y="1359.0" width="17" height="17" fill="#000"/>
<rect x="1808.7" y="347.3" width="17" height="17" fill="#000"/>
<rect x="1808.7" y="851.9" width="17" height="17" fill="#000"/>
<rect x="1808.7" y="1359.0" width="17" height="17" fill="#000"/>
<path d="M1530.2 855 L1541.4 866 M1541.4 855 L1530.2 866" stroke="#000" stroke-width="3.4"/>
<path d="M2671.6 356.2 L2679 348.2 L2686.4 356.2" stroke="#505050" stroke-width="4.4" fill="none" />
<path d="M2672 1371.4 L2679 1379.6 L2686 1371.4" stroke="#505050" stroke-width="4.4" fill="none" />
<path d="M7.5 4.2 L18.5 4.2 L38.5 24.5 L40.4 37.8 L26.5 33.5 L6.2 12.5 L6.2 5.5Z" fill="#fff"/>
<path d="M12 8.5 L31 27.5" stroke="#5da010" stroke-width="2.2" fill="none"/>
<rect x="2670.2" y="7.2" width="28.1" height="28.1" stroke="#d0d0d0" stroke-width="2.4" fill="none" />
<circle cx="2683.5" cy="18.5" r="4.6" stroke="none" stroke-width="0" fill="#d0d0d0" />
<path d="M2681 21 L2686 21 L2687.5 27.5 L2694 29 L2694 32.5 L2673.5 32.5 L2673.5 29 L2679.5 27.5Z" fill="#d0d0d0"/>
<circle cx="2694.0" cy="11.8" r="9.2" stroke="none" stroke-width="0" fill="#373737" />
<path d="M2690.2 6.8 A6.3 6.3 0 1 0 2697.8 6.8" fill="none" stroke="#2fc05c" stroke-width="2.2"/>
<path d="M2694 3.5 L2694 11.5" stroke="#2fc05c" stroke-width="2.2" fill="none" />
<rect x="2813.2" y="7.6" width="18.3" height="16.4" stroke="#d0d0d0" stroke-width="2.4" fill="none" />
<rect x="2821.5" y="16.5" width="17.0" height="16.3" stroke="#d0d0d0" stroke-width="2.4" fill="#373737" />
<path d="M2872.6 9.4 L2897.8 31.2 M2897.8 9.4 L2872.6 31.2" stroke="#d6d6d6" stroke-width="4.2" fill="none" />
<path d="M35 111.8 L25.2 111.8 L18.4 118.3 L18.4 141.5 L39.3 141.5 L39.3 126" stroke="#c8c8c8" stroke-width="2.4" fill="none" />
<path d="M25.6 112 L25.6 118.6 L18.6 118.6" stroke="#c8c8c8" stroke-width="1.6" fill="none" />
<path d="M43.5 110.8 L43.5 121.5 M38.2 116.1 L48.9 116.1" stroke="#2a2a2a" stroke-width="2.2" fill="none" />
<path d="M79 141.5 L79 111.5 L82.5 108.8 L90.5 108.8 L94.5 112.8 L108.5 112.8 L108.5 119.5 L112.8 119.5 L106.8 142.7 L79 142.7Z" fill="#c8c8c8"/>
<path d="M88.2 122.2 L108.6 122.2 L103.4 140.3 L83 140.3Z" fill="#373737"/>
<path d="M129.8 121.7L147.0 121.7L138.4 130.4Z" fill="#c8c8c8"/>
<path d="M174.3 142.9 L174.3 114.5 L180.5 108.5 L209 108.5 L209 142.9Z" fill="#c8c8c8"/>
<rect x="183.0" y="112.7" width="17.3" height="10.5" fill="#373737"/>
<rect x="187.6" y="114.6" width="2.3" height="6.8" fill="#c8c8c8"/>
<circle cx="191.9" cy="129.8" r="2.9" stroke="none" stroke-width="0" fill="#373737" />
<rect x="237.4" y="127.0" width="32.2" height="14.6" stroke="#c8c8c8" stroke-width="2.4" fill="none" />
<path d="M246.3 130.5 L246.3 115 L251.5 109.7 L260.8 109.7 L260.8 130.5" stroke="#c8c8c8" stroke-width="2.4" fill="none" />
<path d="M251.8 110 L251.8 115.4 L246.6 115.4" stroke="#c8c8c8" stroke-width="1.5" fill="none" />
<path d="M316.2 109.7 L333.6 109.7 L333.6 120.2 L324.4 120.2 L324.4 130.5 L316.2 130.5Z" stroke="#c8c8c8" stroke-width="2.4" fill="none" />
<path d="M319.1 113.9 L330.2 113.9 M319.1 126.6 L324 126.6 M319.1 120.3 L324 120.3" stroke="#c8c8c8" stroke-width="2" fill="none" />
<path d="M336.6 130 L347 130" stroke="#c8c8c8" stroke-width="2.2" fill="none" stroke-dasharray="2.4 2.4"/>
<path d="M336.6 141.6 L348.9 141.6 L348.9 129 M336.6 136.8 L344.7 136.8" stroke="#c8c8c8" stroke-width="2.2" fill="none" />
<rect x="378.0" y="109.7" width="17.0" height="21.3" stroke="#c8c8c8" stroke-width="2.4" fill="none" />
<path d="M380.5 113.9 L392 113.9 M380.5 120.2 L392 120.2 M380.5 126.5 L392 126.5" stroke="#c8c8c8" stroke-width="2" fill="none" />
<rect x="393.4" y="120.6" width="16.5" height="20.9" stroke="#c8c8c8" stroke-width="2.4" fill="#373737" />
<path d="M396.6 124.9 L406.8 124.9 M396.6 131.1 L406.8 131.1 M396.6 137.3 L406.8 137.3" stroke="#c8c8c8" stroke-width="2" fill="none" />
<path d="M438.5 132.2 L438.5 111.5 L441 109.3 L453.5 109.3 L456 111.5 L456 132.2Z" fill="#c8c8c8"/>
<path d="M443.1 112.2 L451.3 112.2" stroke="#373737" stroke-width="1.8" fill="none" />
<rect x="455.2" y="120.6" width="16.4" height="20.9" stroke="#c8c8c8" stroke-width="2.4" fill="#373737" />
<path d="M458.3 124.9 L468.5 124.9 M458.3 131.1 L468.5 131.1 M458.3 137.3 L468.5 137.3" stroke="#c8c8c8" stroke-width="2" fill="none" />
<path d="M534.4 114.9 A14 14 0 1 1 531.2 142.5" fill="none" stroke="#c8c8c8" stroke-width="2.6"/>
<path d="M529 141.9 A14 14 0 0 1 520.5 128.9" fill="none" stroke="#c8c8c8" stroke-width="2.6" stroke-dasharray="4.6 3.4"/>
<path d="M525.6 115.6 L534.9 108.9 L534.9 122.3Z" fill="#c8c8c8"/>
<path d="M568.3 121.5L585.8 121.5L577.0 130.4Z" fill="#c8c8c8"/>
<path d="M627.6 114.9 A14 14 0 1 0 630.8 142.5" fill="none" stroke="#4a4a4a" stroke-width="2.6"/>
<path d="M633 141.9 A14 14 0 0 0 641.5 128.9" fill="none" stroke="#4a4a4a" stroke-width="2.6" stroke-dasharray="4.6 3.4"/>
<path d="M636.4 115.6 L627.1 108.9 L627.1 122.3Z" fill="#4a4a4a"/>
<path d="M664.8 121.5L681.8 121.5L673.3 130.2Z" fill="#4a4a4a"/>
<path d="M727.5 141.4 L740.5 128.4" stroke="#353535" stroke-width="2.8" fill="none" />
<path d="M743.2 125.6 L741.6 133.6 L735.2 127.2Z" fill="#353535"/>
<path d="M759.6 109.5 L749.5 119.6" stroke="#353535" stroke-width="2.8" fill="none" />
<path d="M744 125 L745.6 117 L752 123.4Z" fill="#353535"/>
<path d="M815 109.6 L806.7 109.6 L806.7 141.3 L838 141.3 L838 109.6 L829.2 109.6" stroke="#c8c8c8" stroke-width="2.4" fill="none" />
<path d="M822.2 113.7 L822.2 130" stroke="#c8c8c8" stroke-width="3.4" fill="none" />
<path d="M815.4 127.8 L829 127.8 L822.2 136.6Z" fill="#c8c8c8"/>
<path d="M876.8 109.6 L868.4 109.6 L868.4 141.3 L899.8 141.3 L899.8 109.6 L891 109.6" stroke="#c8c8c8" stroke-width="2.4" fill="none" />
<path d="M884 120.5 L884 136.4" stroke="#c8c8c8" stroke-width="5" fill="none" />
<path d="M876.2 122.4 L891.8 122.4 L884 112.2Z" fill="#c8c8c8"/>
<path d="M930 133.5 L930 141.4 L942.6 141.4 L942.6 133.5 M936.3 135 L936.3 141.4 M930 137.6 L942.6 137.6" stroke="#c8c8c8" stroke-width="2.2" fill="none" />
<path d="M929.8 131.8 L929.8 129.8 L932.3 129.8 M940.3 129.8 L942.8 129.8 L942.8 131.8" stroke="#c8c8c8" stroke-width="1.8" fill="none" />
<path d="M932.6 135.2 L936.3 130 L940 135.2Z" fill="#c8c8c8"/>
<path d="M1154.7 121.5L1172.0 121.5L1163.3 130.4Z" fill="#c8c8c8"/>
<path d="M1202.5 117.3 L1202.5 109.8 L1210.3 109.8 M1226.6000000000001 109.8 L1234.4 109.8 L1234.4 117.3 M1234.4 134.1 L1234.4 141.6 L1226.6000000000001 141.6 M1210.3 141.6 L1202.5 141.6 L1202.5 134.1" stroke="#c8c8c8" stroke-width="2.4" fill="none" />
<path d="M1281.6 110 L1289.7 110 L1289.7 133 L1313.3 133 L1313.3 141.6 L1281.6 141.6Z" stroke="#c8c8c8" stroke-width="2.4" fill="none" />
<path d="M1285.6 114.2 L1289.6 114.2 M1285.6 118.6 L1289.6 118.6 M1285.6 123 L1289.6 123 M1285.6 127.4 L1289.6 127.4 M1285.6 131.6 L1289.6 131.6 M1290 133.4 L1290 137.6 M1294.4 133.4 L1294.4 137.6 M1298.8 133.4 L1298.8 137.6 M1303.2 133.4 L1303.2 137.6 M1307.6 133.4 L1307.6 137.6 " stroke="#c8c8c8" stroke-width="2" fill="none" />
<ellipse cx="1305.8" cy="114.0" rx="8" ry="4.8" fill="none" stroke="#c8c8c8" stroke-width="2"/>
<ellipse cx="1305.8" cy="114.0" rx="2.6" ry="1.6" fill="#c8c8c8"/>
<path d="M1342.2 110.0 L1357.3 110.0 M1342.2 116.4 L1357.3 116.4 M1342.2 122.7 L1376.4 122.7 M1342.2 129.1 L1376.4 129.1 M1342.2 135.4 L1376.4 135.4 M1342.2 141.8 L1376.4 141.8 M1343.4 110.0 L1343.4 141.8 M1349.8 110.0 L1349.8 141.8 M1356.1 110.0 L1356.1 141.8 M1362.5 122.7 L1362.5 141.8 M1368.8 122.7 L1368.8 141.8 M1375.2 122.7 L1375.2 141.8 " stroke="#c8c8c8" stroke-width="2.4" fill="none" />
<ellipse cx="1367.7" cy="114.0" rx="8" ry="4.8" fill="none" stroke="#c8c8c8" stroke-width="2"/>
<ellipse cx="1367.7" cy="114.0" rx="2.6" ry="1.6" fill="#c8c8c8"/>
<path d="M1415.6 109 L1415.6 142.6" stroke="#c8c8c8" stroke-width="2.4" fill="none" stroke-dasharray="2.3 2.1"/>
<path d="M1403.8 131.3 L1438 131.3" stroke="#c8c8c8" stroke-width="2.4" fill="none" stroke-dasharray="2.3 2.1"/>
<ellipse cx="1429.5" cy="114.0" rx="8" ry="4.8" fill="none" stroke="#c8c8c8" stroke-width="2"/>
<ellipse cx="1429.5" cy="114.0" rx="2.6" ry="1.6" fill="#c8c8c8"/>
<path d="M1591.4 121.5L1608.9 121.5L1600.2 130.4Z" fill="#c8c8c8"/>
<path d="M1687.4 122.8 L1687.4 128.8 L1683.6 129.0 L1681.9 132.9 L1684.5 135.8 L1680.3 140.0 L1677.4 137.4 L1673.5 139.1 L1673.3 142.9 L1667.3 142.9 L1667.1 139.1 L1663.2 137.4 L1660.3 140.0 L1656.1 135.8 L1658.7 132.9 L1657.0 129.0 L1653.2 128.8 L1653.2 122.8 L1657.0 122.6 L1658.7 118.7 L1656.1 115.8 L1660.3 111.6 L1663.2 114.2 L1667.1 112.5 L1667.3 108.7 L1673.3 108.7 L1673.5 112.5 L1677.4 114.2 L1680.3 111.6 L1684.5 115.8 L1681.9 118.7 L1683.6 122.6Z M1678.7 125.8 A8.4 8.4 0 1 0 1661.9 125.8 A8.4 8.4 0 1 0 1678.7 125.8Z" fill="#c8c8c8" fill-rule="evenodd"/>
<rect x="1733.1" y="109.7" width="31.7" height="32.0" stroke="#c8c8c8" stroke-width="2.5" fill="none" />
<path d="M1782.6 121.5L1800.4 121.5L1791.5 130.2Z" fill="#c8c8c8"/>
<path d="M20.2 193.2 L47.8 193.2 L47.8 220.2 L20.2 220.2Z" stroke="#f4f4f4" stroke-width="1.8" fill="none" />
<rect x="17.5" y="190.5" width="5.4" height="5.4" stroke="#f4f4f4" stroke-width="1.8" fill="#373737" />
<rect x="17.5" y="203.9" width="5.4" height="5.4" stroke="#f4f4f4" stroke-width="1.8" fill="#373737" />
<rect x="17.5" y="217.5" width="5.4" height="5.4" stroke="#f4f4f4" stroke-width="1.8" fill="#373737" />
<rect x="31.4" y="190.5" width="5.4" height="5.4" stroke="#f4f4f4" stroke-width="1.8" fill="#373737" />
<rect x="31.4" y="217.5" width="5.4" height="5.4" stroke="#f4f4f4" stroke-width="1.8" fill="#373737" />
<rect x="45.1" y="190.5" width="5.4" height="5.4" stroke="#f4f4f4" stroke-width="1.8" fill="#373737" />
<rect x="45.1" y="203.9" width="5.4" height="5.4" stroke="#f4f4f4" stroke-width="1.8" fill="#373737" />
<rect x="45.1" y="217.5" width="5.4" height="5.4" stroke="#f4f4f4" stroke-width="1.8" fill="#373737" />
<path d="M321.2 183 L321.2 194.4 M346.2 183 L346.2 194.4 M322 188.7 L345.4 188.7" stroke="#c8c8c8" stroke-width="2.4" fill="none" />
<path d="M322.4 188.7 L329 184.6 L329 192.8Z M345 188.7 L338.4 184.6 L338.4 192.8Z" fill="#c8c8c8"/>
<path d="M333.7 188.7 L330 185.8 L330 191.6Z M333.7 188.7 L337.4 185.8 L337.4 191.6Z" fill="#c8c8c8"/>
<path d="M328.4 209.7 L338.9 209.7 M328.4 235.3 L338.9 235.3 M333.6 210.5 L333.6 234.5" stroke="#c8c8c8" stroke-width="2.4" fill="none" />
<path d="M333.6 211 L329.5 217.6 L337.7 217.6Z M333.6 234 L329.5 227.4 L337.7 227.4Z" fill="#c8c8c8"/>
<path d="M333.6 222.5 L330.6 218.8 L336.6 218.8Z M333.6 222.5 L330.6 226.2 L336.6 226.2Z" fill="#c8c8c8"/>
<path d="M692 204.4 L692 201.6 A3.5 3.5 0 0 1 699 201.6" stroke="#a8a8a8" stroke-width="1.7" fill="none" />
<path d="M748 209.5 A14.3 14.3 0 1 0 752.5 197.5" fill="none" stroke="#c8c8c8" stroke-width="2.3" transform="rotate(-38 761.4 207.7)"/>
<path d="M743.4 208 L752.8 208 L748 214.8Z" fill="#c8c8c8"/>
<circle cx="921.0" cy="199.5" r="7.6" stroke="#c8c8c8" stroke-width="2.2" fill="none" />
<path d="M974.8 197.1 L981.2 197.1 L981.2 207 L984.9 207 L984.9 213.6 L974.8 213.6Z" stroke="#c8c8c8" stroke-width="2.4" fill="none" />
<path d="M1004.5 197.1 L998.1 197.1 L998.1 207 L993.8 207 L993.8 213.6 L1004.5 213.6Z" stroke="#c8c8c8" stroke-width="2.4" fill="#12aaff" />
<path d="M989.3 189.6 L989.3 223.4" stroke="#f4f4f4" stroke-width="2.2" fill="none" stroke-dasharray="4.4 2.2"/>
<path d="M1044.9 202.8 L1044.9 192.9 L1062.1 192.9 L1062.1 199.3 L1051.6 199.3 L1051.6 202.8Z" stroke="#c8c8c8" stroke-width="2.4" fill="none" />
<path d="M1044.9 212.4 L1044.9 222.3 L1062.1 222.3 L1062.1 216.6 L1051.6 216.6 L1051.6 212.4Z" stroke="#c8c8c8" stroke-width="2.4" fill="#12aaff" />
<path d="M1035 207.7 L1069.8 207.7" stroke="#f4f4f4" stroke-width="2.2" fill="none" stroke-dasharray="4.4 2.2"/>
<rect x="1115.3" y="190.8" width="18.5" height="18.4" stroke="#c8c8c8" stroke-width="2.4" fill="none" />
<rect x="1128.6" y="203.8" width="18.8" height="18.5" stroke="#c8c8c8" stroke-width="2.4" fill="#373737" />
<rect x="1115.3" y="190.8" width="18.5" height="18.4" stroke="#c8c8c8" stroke-width="2.4" fill="#373737" />
<path d="M1140.4 197.2 L1146.5 191.6" stroke="#b4b4b4" stroke-width="2.2" fill="none" />
<path d="M1141.4 190 L1148.4 190 L1148.4 197Z" fill="#b4b4b4"/>
<path d="M1122 216 L1116 221.6" stroke="#b4b4b4" stroke-width="2.2" fill="none" />
<path d="M1114.2 216.2 L1114.2 223.2 L1121.2 223.2Z" fill="#b4b4b4"/>
<path d="M1206.7 190.2 C1203.5 197 1200.5 202 1198.2 207.5 L1202.6 214 L1210.8 214 L1215.2 207.5 C1212.9 202 1209.9 197 1206.7 190.2Z" stroke="#c8c8c8" stroke-width="2" fill="none" />
<path d="M1206.7 192.5 L1206.7 207.3" stroke="#c8c8c8" stroke-width="2.6" fill="none" />
<rect x="1202.9" y="214.8" width="7.6" height="7.5" stroke="#c8c8c8" stroke-width="2.2" fill="none" />
<path d="M1374.0 202.5L1391.3 202.5L1382.7 211.2Z" fill="#c8c8c8"/>
<path d="M1508.0 202.5L1525.4 202.5L1516.7 211.2Z" fill="#c8c8c8"/>
<path d="M1731.7 202.5L1749.2 202.5L1740.5 211.2Z" fill="#c8c8c8"/>
<path d="M1848.6 202.5L1866.0 202.5L1857.3 211.2Z" fill="#c8c8c8"/>
<path d="M1921 193.7 C1952 193 1952 220.5 1921 219.5" fill="none" stroke="#a9a9a9" stroke-width="2"/>
<path d="M1917.2 197.5 L1917.2 215.5" stroke="#c8c8c8" stroke-width="2" fill="none" />
<rect x="1913.4" y="189.8" width="7.6" height="7.6" stroke="#c8c8c8" stroke-width="2" fill="#2d2d2d" />
<rect x="1913.4" y="215.7" width="7.6" height="7.6" stroke="#c8c8c8" stroke-width="2" fill="#2d2d2d" />
<circle cx="2017.2" cy="206.4" r="7.4" stroke="#1b9fe6" stroke-width="2.8" fill="#373737" />
<path d="M2032.6 219.8L2032.6 229.8L2022.6 229.8Z" fill="#c8c8c8"/>
<path d="M2069 204.5 C2073 196 2076 190.6 2080.4 190.6 C2086 190.6 2089 200.5 2099.5 203" stroke="#bdbdbd" stroke-width="2" fill="none" />
<path d="M2100.3 199.6 L2100.3 206.4 M2096.9 203 L2103.7 203" stroke="#bdbdbd" stroke-width="1.6" fill="none" />
<path d="M2069 223.3 C2073 214.5 2076 209 2080.4 209 C2086 209 2090 219.5 2102 223" stroke="#bdbdbd" stroke-width="2" fill="none" />
<path d="M2199.5 189.8 L2199.5 223.8" stroke="#f4f4f4" stroke-width="2.2" fill="none" />
<rect x="2191.3" y="205.6" width="16.7" height="5.0" stroke="#f4f4f4" stroke-width="2" fill="#2d2d2d" />
<path d="M2257 191 L2261 195 M2288.5 191 L2284.5 195 M2257 222.5 L2261 218.5 M2288.5 222.5 L2284.5 218.5 M2272.5 190 L2272.5 194 M2272.5 219.5 L2272.5 223.5 M2255.8 206.8 L2259.8 206.8 M2285.5 206.8 L2289.5 206.8" stroke="#434343" stroke-width="1.8" fill="none" />
<circle cx="2362.5" cy="206.9" r="16.6" stroke="#5a5a5a" stroke-width="2.2" fill="none" />
<path d="M2362.5 195 L2362.5 218.8 M2350.6 206.9 L2374.4 206.9" stroke="#5a5a5a" stroke-width="4.2" fill="none" />
<path d="M92.6 254.8 L109 273.2 L105 273.2 L105 287.6 L96 287.6 L96 279.2 L89.3 279.2 L89.3 287.6 L80.3 287.6 L80.3 273.2 L76.3 273.2Z" fill="#c8c8c8"/>
<path d="M533.2 260.5 L533.2 283 M522 271.7 L544.4 271.7" stroke="#6a6a6a" stroke-width="3.4" fill="none" />
<path d="M76.5 307.4 L98 307.4" stroke="#8c8c8c" stroke-width="2.2" fill="none" stroke-dasharray="2.3 2"/>
<path d="M81.6 302.6 L81.6 323.6" stroke="#8c8c8c" stroke-width="2.2" fill="none" stroke-dasharray="2.3 2"/>
<path d="M82.5 308.2 L93 318.6" stroke="#a4a4a4" stroke-width="2" fill="none" />
<rect x="91.6" y="317.4" width="4.4" height="4.4" fill="#a4a4a4"/>
<path d="M27.2 268.5 L27.2 296.5 L33.4 291 L37.6 301.6 L42.4 299.6 L38.2 289.4 L46.4 288.6Z" fill="#c8c8c8"/>
<path d="M57.4 298.4L57.4 308.4L47.4 308.4Z" fill="#c8c8c8"/>
<path d="M26.5 330 C20 345 22 356 31.5 365" stroke="#b8b8b8" stroke-width="1.8" fill="none" />
<rect x="21.6" y="338.6" width="7.4" height="7.4" stroke="#c8c8c8" stroke-width="1.8" fill="#373737" />
<path d="M37 350.5 L51 358.5 L44 365.5Z" fill="#c8c8c8"/>
<path d="M58.0 360.5L58.0 370.5L48.0 370.5Z" fill="#c8c8c8"/>
<path d="M27.2 408.7 L27.2 433.6 L50.8 433.6 M17 419.4 L41.4 419.4 L41.4 442.8" stroke="#c8c8c8" stroke-width="4.4" fill="none" />
<path d="M58.0 439.6L58.0 449.6L48.0 449.6Z" fill="#c8c8c8"/>
<circle cx="30.7" cy="484.9" r="12.6" stroke="#c8c8c8" stroke-width="2.4" fill="none" />
<path d="M40 494.6 L50.6 504.4" stroke="#c8c8c8" stroke-width="4.6" fill="none" />
<path d="M58.0 500.0L58.0 510.0L48.0 510.0Z" fill="#c8c8c8"/>
<path d="M24.4 549.7 L24.4 564.2 M17.2 557 L31.6 557" stroke="#c8c8c8" stroke-width="1.9" fill="none" />
<path d="M24.4 570 L24.4 581 C24.4 584.5 28.6 584.5 28.6 581 L28.6 578.5 C28.6 576 31.8 576 31.8 578.5 L31.8 580.5 C31.8 583.5 35.4 583.5 35.4 580.5 L35.4 578.2 C35.4 576 38.6 576 38.6 578.2 L38.6 579.5 C38.6 582.5 42.2 582.5 42.2 579.5 L42.2 577.5 C42.2 575.5 45.4 575.5 45.4 577.5 C45.6 579.5 48.5 579.5 49.5 577.5" stroke="#c8c8c8" stroke-width="1.9" fill="none" />
<path d="M58.0 580.0L58.0 590.0L48.0 590.0Z" fill="#c8c8c8"/>
<path d="M18.5 623.5 C18.5 612.5 31 609.5 31.5 621 C32 629 24.5 640.5 36.5 643.8 C46 645.5 52 634 46.5 627.5 C43.5 624.5 40.5 625.5 39.5 626.5" stroke="#c8c8c8" stroke-width="3.4" fill="none" />
<rect x="18.9" y="674.9" width="30.7" height="30.9" stroke="#c8c8c8" stroke-width="2.5" fill="none" />
<path d="M58.0 702.5L58.0 712.5L48.0 712.5Z" fill="#c8c8c8"/>
<circle cx="34.2" cy="752.1" r="16.0" stroke="#c8c8c8" stroke-width="2.4" fill="none" />
<path d="M58.0 765.0L58.0 775.0L48.0 775.0Z" fill="#c8c8c8"/>
<path d="M17.6 813.8 L25.9 798.5 L42.5 798.5 L50.6 813.8 L42.5 829.2 L25.9 829.2Z" stroke="#c8c8c8" stroke-width="2.4" fill="none" />
<path d="M58.0 826.4L58.0 836.4L48.0 836.4Z" fill="#c8c8c8"/>
<text x="14.8" y="909.6" font-size="48.5" fill="#c8c8c8" textLength="38.5" lengthAdjust="spacingAndGlyphs">A</text>
<path d="M58.0 905.0L58.0 915.0L48.0 915.0Z" fill="#c8c8c8"/>
<path d="M22.5 981.5 L45.5 960" stroke="#a8a8a8" stroke-width="2.4" fill="none" />
<path d="M17.5 980 L25.5 988 M41.5 955 L50.5 963.5" stroke="#b4b4b4" stroke-width="2.2" fill="none" />
<path d="M58.0 984.4L58.0 994.4L48.0 994.4Z" fill="#c8c8c8"/>
<path d="M22.5 1021.5 L45.5 1044" stroke="#c8c8c8" stroke-width="2.4" fill="none" />
<rect x="17.9" y="1017.3" width="8.7" height="8.7" stroke="#dcdcdc" stroke-width="1.9" fill="#ff6a00" />
<rect x="41.4" y="1040.6" width="8.7" height="8.7" stroke="#dcdcdc" stroke-width="1.9" fill="#ff6a00" />
<path d="M58.0 1046.0L58.0 1056.0L48.0 1056.0Z" fill="#c8c8c8"/>
<path d="M26.5 1127.2 L49.8 1127.2 L49.8 1104.5" stroke="#c8c8c8" stroke-width="4.4" fill="none" />
<rect x="18.4" y="1095.8" width="25.4" height="25.4" stroke="#c8c8c8" stroke-width="2.4" fill="#373737" />
<path d="M58.0 1124.6L58.0 1134.6L48.0 1134.6Z" fill="#c8c8c8"/>
<path d="M20.5 1266 L41.5 1245" stroke="#c8c8c8" stroke-width="4.6" fill="none" />
<path d="M19.6 1266.8 L27 1259.4" stroke="#ff7a1a" stroke-width="3.6" fill="none" />
<path d="M17.5 1268.8 L20.5 1265.8" stroke="#c8c8c8" stroke-width="2.6" fill="none" />
<path d="M37.5 1244.5 L44 1238.2 C46 1235.6 50.4 1237 50.4 1240.5 L50.8 1246 L46.5 1252.5Z" fill="#c8c8c8"/>
<path d="M58.0 1265.6L58.0 1275.6L48.0 1275.6Z" fill="#c8c8c8"/>
<path d="M19.2 1315 L33.6 1300.6 L48 1315 L33.6 1329.4Z" stroke="#c8c8c8" stroke-width="2.6" fill="none" />
<path d="M25.4 1317 L41.6 1317 L33.6 1324.8Z" fill="#f45a62"/>
<path d="M32 1300.5 L36.5 1296.2 L49.4 1309" stroke="#c8c8c8" stroke-width="3.6" fill="none" />
<path d="M50.6 1317 L50.6 1331 L42.6 1331Z" fill="#f45a62"/>
<path d="M58.0 1327.4L58.0 1337.4L48.0 1337.4Z" fill="#c8c8c8"/>
<path d="M2720.2 261.6 L2736 277.2 M2736 261.6 L2720.2 277.2" stroke="#6e7174" stroke-width="2.2" fill="none" />
<path d="M2711.5 305 L2711.5 327.5 L2716.8 323 L2720.5 332 L2724 330.5 L2720.4 321.8 L2727 321.3Z" fill="#cfcfcf"/>
<text x="2728.2" y="321.5" font-size="27" fill="#cfcfcf" textLength="17" lengthAdjust="spacingAndGlyphs">?</text>
<path d="M2728.2 468.6 A9.3 9.3 0 1 0 2731 477.6" fill="none" stroke="#cfcfcf" stroke-width="2"/>
<path d="M2727.2 478.2 L2734.4 478.2 L2731.2 472.4Z" fill="#cfcfcf"/>
<path d="M2737 454.6 L2737 466.2 M2731.2 460.4 L2742.8 460.4" stroke="#cfcfcf" stroke-width="1.7" fill="none" />
<path d="M2734.6 456.8 L2737 453.8 L2739.4 456.8Z M2734.6 464 L2737 467 L2739.4 464Z M2733.4 458 L2730.4 460.4 L2733.4 462.8Z M2740.6 458 L2743.6 460.4 L2740.6 462.8Z" fill="#cfcfcf"/>
<text x="2712.5" y="745.5" font-size="24" fill="#cfcfcf" textLength="17" lengthAdjust="spacingAndGlyphs">A</text>
<path d="M2743.1 751.8 L2743.1 754.6 L2740.5 754.5 L2739.8 756.0 L2741.7 757.8 L2739.8 759.7 L2738.0 757.8 L2736.5 758.5 L2736.6 761.1 L2733.8 761.1 L2733.9 758.5 L2732.4 757.8 L2730.6 759.7 L2728.7 757.8 L2730.6 756.0 L2729.9 754.5 L2727.3 754.6 L2727.3 751.8 L2729.9 751.9 L2730.6 750.4 L2728.7 748.6 L2730.6 746.7 L2732.4 748.6 L2733.9 747.9 L2733.8 745.3 L2736.6 745.3 L2736.5 747.9 L2738.0 748.6 L2739.8 746.7 L2741.7 748.6 L2739.8 750.4 L2740.5 751.9Z M2738.4 753.2 A3.2 3.2 0 1 0 2732.0 753.2 A3.2 3.2 0 1 0 2738.4 753.2Z" fill="#e0e0e0" fill-rule="evenodd"/>
<circle cx="2728.8" cy="1033.1" r="16.6" stroke="#5a5a5a" stroke-width="2.2" fill="none" />
<path d="M2728.8 1021.5 L2728.8 1044.7 M2717.2 1033.1 L2740.4 1033.1" stroke="#5a5a5a" stroke-width="4" fill="none" />
<path d="M2764.6 275.5L2773.6 283.9L2764.6 292.3Z" fill="#d0d0d0"/>
<path d="M2763.7 318.8 L2772.9 309.8" stroke="#b4b4b4" stroke-width="3.4" fill="none" />
<path d="M2761.9 320.7 L2764.5 318.1" stroke="#ff7a1a" stroke-width="3.4" fill="none" />
<circle cx="2774.1" cy="308.4" r="3.3" stroke="none" stroke-width="0" fill="#dcdcdc" />
<path d="M2759.8 352.5 L2769.3 340.5 L2778.8 352.5" stroke="#4d4f51" stroke-width="3.6" fill="none" />
<path d="M2753.5 369.7 L2785.1 400.8 M2785.1 369.7 L2753.5 400.8" stroke="#1e1e1e" stroke-width="1.6" fill="none" />
<path d="M2759.8 1392.5 L2769.3 1404 L2778.8 1392.5" stroke="#64676a" stroke-width="3.4" fill="none" />
<path d="M2760.3 1430.5 L2767.3 1437.5 L2760.3 1444.5 M2768.8 1430.5 L2775.8 1437.5 L2768.8 1444.5" stroke="#5c5e60" stroke-width="2.2" fill="none" />
<path d="M2805.2 275.5L2814.2 283.9L2805.2 292.3Z" fill="#d0d0d0"/>
<path d="M2804.2 318.8 L2813.4 309.8" stroke="#b4b4b4" stroke-width="3.4" fill="none" />
<path d="M2802.4 320.7 L2805.0 318.1" stroke="#ff7a1a" stroke-width="3.4" fill="none" />
<circle cx="2814.7" cy="308.4" r="3.3" stroke="none" stroke-width="0" fill="#dcdcdc" />
<path d="M2800.3 352.5 L2809.8 340.5 L2819.3 352.5" stroke="#4d4f51" stroke-width="3.6" fill="none" />
<path d="M2794.1 369.7 L2825.6 400.8 M2825.6 369.7 L2794.1 400.8" stroke="#1e1e1e" stroke-width="1.6" fill="none" />
<path d="M2800.3 1392.5 L2809.8 1404 L2819.3 1392.5" stroke="#64676a" stroke-width="3.4" fill="none" />
<path d="M2800.8 1430.5 L2807.8 1437.5 L2800.8 1444.5 M2809.3 1430.5 L2816.3 1437.5 L2809.3 1444.5" stroke="#5c5e60" stroke-width="2.2" fill="none" />
<path d="M2845.7 275.5L2854.7 283.9L2845.7 292.3Z" fill="#d0d0d0"/>
<path d="M2844.1 319.5 L2854.0 309.8" stroke="#424242" stroke-width="4" fill="none" />
<circle cx="2855.2" cy="308.4" r="3.3" stroke="none" stroke-width="0" fill="#424242" />
<path d="M2840.9 352.5 L2850.4 340.5 L2859.9 352.5" stroke="#4d4f51" stroke-width="3.6" fill="none" />
<path d="M2834.8 369.7 L2866.0 400.8 M2866.0 369.7 L2834.8 400.8" stroke="#1e1e1e" stroke-width="1.6" fill="none" />
<path d="M2840.9 1392.5 L2850.4 1404 L2859.9 1392.5" stroke="#64676a" stroke-width="3.4" fill="none" />
<path d="M2841.4 1430.5 L2848.4 1437.5 L2841.4 1444.5 M2849.9 1430.5 L2856.9 1437.5 L2849.9 1444.5" stroke="#5c5e60" stroke-width="2.2" fill="none" />
<path d="M2886.9 275.5L2895.9 283.9L2886.9 292.3Z" fill="#d0d0d0"/>
<path d="M2885.3 319.5 L2895.2 309.8" stroke="#424242" stroke-width="4" fill="none" />
<circle cx="2896.4" cy="308.4" r="3.3" stroke="none" stroke-width="0" fill="#424242" />
<path d="M2882.1 352.5 L2891.6 340.5 L2901.1 352.5" stroke="#4d4f51" stroke-width="3.6" fill="none" />
<path d="M2875.3 369.7 L2906.2 400.8 M2906.2 369.7 L2875.3 400.8" stroke="#1e1e1e" stroke-width="1.6" fill="none" />
<path d="M2882.1 1392.5 L2891.6 1404 L2901.1 1392.5" stroke="#64676a" stroke-width="3.4" fill="none" />
<path d="M2882.6 1430.5 L2889.6 1437.5 L2882.6 1444.5 M2891.1 1430.5 L2898.1 1437.5 L2891.1 1444.5" stroke="#5c5e60" stroke-width="2.2" fill="none" />
<rect x="2791.9" y="403.7" width="35.9" height="35.5" stroke="#f4f4f4" stroke-width="2.2" fill="none" />
<rect x="2752.8" y="441.4" width="33.0" height="32.5" stroke="#bdbdbd" stroke-width="1.8" fill="none" />
<path d="M418.4 1394.3 L429.3 1427.4 L535.9 1427.4 L546.5 1394.3" fill="none" stroke="#b4b4b4" stroke-width="2"/>
<path d="M119.0 1403 L131.0 1403 L131.0 1421.4 L114.5 1421.4 L114.5 1407.5 Z" stroke="#a6a6a6" stroke-width="1.9" fill="none" />
<path d="M118.9 1413.8 L126.5 1413.8 M122.7 1410 L122.7 1417.6" stroke="#a6a6a6" stroke-width="1.8" fill="none" />
<path d="M378.2 1403 L390.2 1403 L390.2 1421.4 L373.7 1421.4 L373.7 1407.5 Z" stroke="#a6a6a6" stroke-width="1.9" fill="none" />
<path d="M378.1 1413.8 L385.7 1413.8 M381.9 1410 L381.9 1417.6" stroke="#a6a6a6" stroke-width="1.8" fill="none" />
<path d="M168.0 1402.5L151.5 1412.2L168.0 1422.0Z" fill="#4a4a4a"/>
<path d="M200.0 1402.5L185.4 1412.2L200.0 1422.0Z" fill="#4a4a4a"/>
<path d="M307.6 1402.5L321.5 1412.2L307.6 1422.0Z" fill="#4a4a4a"/>
<path d="M338.7 1402.5L355.0 1412.2L338.7 1422.0Z" fill="#4a4a4a"/>
<path d="M1426.4 1404.8 L1417 1411.2 L1426.4 1417.6" stroke="#505050" stroke-width="4.4" fill="none" />
<path d="M2639.4 1405 L2647.8 1411.6 L2639.4 1418.2" stroke="#505050" stroke-width="4.4" fill="none" />
<circle cx="2676.7" cy="1409.1" r="9.0" stroke="#c4c4c4" stroke-width="1.8" fill="none" />
<path d="M2683.4 1416 L2690 1422.6" stroke="#d4d4d4" stroke-width="3.2" fill="none" />
<circle cx="2676.7" cy="1404.7" r="1.5" stroke="none" stroke-width="0" fill="#b8b8b8" />
<circle cx="2676.7" cy="1413.5" r="1.5" stroke="none" stroke-width="0" fill="#b8b8b8" />
<circle cx="2672.3" cy="1409.1" r="1.5" stroke="none" stroke-width="0" fill="#b8b8b8" />
<circle cx="2681.1" cy="1409.1" r="1.5" stroke="none" stroke-width="0" fill="#b8b8b8" />
<path d="M95.0 1441.8L104.8 1450.5L95.0 1459.3Z" fill="#c8c8c8"/>
<path d="M125.6 1456 L134.5 1447" stroke="#b4b4b4" stroke-width="3.4" fill="none" />
<path d="M123.8 1457.8 L126.4 1455.2" stroke="#ff7a1a" stroke-width="3.4" fill="none" />
<circle cx="135.7" cy="1445.5" r="3.0" stroke="none" stroke-width="0" fill="#d8d8d8" />
<path d="M169.5 1440.5 L157 1450.5 L169.5 1460.5" stroke="#555" stroke-width="3" fill="none" />
<path d="M187 1435 L218.6 1466.3 M218.6 1435 L187 1466.3" stroke="#111" stroke-width="1.8" fill="none" />
<path d="M2627 1441 L2637 1450 L2627 1459" stroke="#4c4c4c" stroke-width="3" fill="none" />
<path d="M2664 1443 L2671 1450 L2664 1457 M2672 1443 L2679 1450 L2672 1457" stroke="#555" stroke-width="2.2" fill="none" />
<circle cx="34.0" cy="1404.0" r="16.5" stroke="#5a5a5a" stroke-width="2.2" fill="none" />
<path d="M34 1392 L34 1416 M22 1404 L46 1404" stroke="#5a5a5a" stroke-width="4.2" fill="none" />
<path d="M26.5 1436.5 L33.5 1443.5 L26.5 1450.5 M35 1436.5 L42 1443.5 L35 1450.5" stroke="#5f5f5f" stroke-width="2.2" fill="none" />
<path d="M260.0 1503.0L269.0 1511.1L260.0 1519.2Z" fill="#c8c8c8"/>
<path d="M2050.5 1489.6 L2091.1 1530.2 M2091.1 1489.6 L2050.5 1530.2" stroke="#111" stroke-width="2" fill="none" />
<rect x="1937.7" y="1494.5" width="31.5" height="26.9" stroke="#d8d8d8" stroke-width="2.3" fill="#f25a60" />
<rect x="1938.9" y="1508.0" width="29.1" height="12.2" fill="#12a5ec"/>
<ellipse cx="1953.4" cy="1507.6" rx="5.6" ry="4.4" fill="#6a6a6a" stroke="#e4e4e4" stroke-width="1.6"/>
<circle cx="1953.4" cy="1507.6" r="1.6" stroke="none" stroke-width="0" fill="#e4e4e4" />
<rect x="1947.0" y="1522.4" width="13.0" height="2.0" fill="#d8d8d8"/>
<path d="M1940.8 1526.5 L1966.4 1526.5" stroke="#d8d8d8" stroke-width="2.2" fill="none" />
<path d="M2010.5 1511.5 L2025.5 1496.5 L2040.5 1511.5 L2025.5 1526.5Z" stroke="#d0d0d0" stroke-width="2.4" fill="none" />
<path d="M2017 1513 L2034 1513 L2025.5 1521.5Z" stroke="none" stroke-width="0" fill="#f0525a" />
<path d="M2042.6 1514.5 L2042.6 1528.5 L2033 1528.5Z" stroke="none" stroke-width="0" fill="#f0525a" />
<path d="M2024 1496 L2029.5 1490.8 L2041 1502" stroke="#d0d0d0" stroke-width="3.0" fill="none" />
<path d="M2472 1495.5 C2466.5 1503 2464.2 1508.5 2466.5 1516 L2477.5 1516 C2479.8 1508.5 2477.5 1503 2472 1495.5Z M2472 1497 L2472 1509" stroke="#d0d0d0" stroke-width="1.9" fill="none" />
<rect x="2466.8" y="1518.5" width="10.4" height="9.1" stroke="#d0d0d0" stroke-width="1.9" fill="none" />
<path d="M34 1581.2 L48.2 1579.2 L48.2 1592.3 L34 1592.3Z M50.6 1578.8 L68.3 1576.2 L68.3 1592.3 L50.6 1592.3Z M34 1594.7 L48.2 1594.7 L48.2 1607.8 L34 1605.8Z M50.6 1594.7 L68.3 1594.7 L68.3 1610.8 L50.6 1608.2Z" fill="#fff"/>
<circle cx="144.6" cy="1593.2" r="20.4" stroke="#f2f2f2" stroke-width="5.2" fill="none" />
<rect x="784" y="1577.2" width="14.4" height="24" rx="2" fill="none" stroke="#8f8f8f" stroke-width="2.2"/>
<path d="M780 1592 C780 1610 802.6 1610 802.6 1592 M791.3 1605.5 L791.3 1610.4 M785 1610.4 L797.6 1610.4" stroke="#8f8f8f" stroke-width="2" fill="none" />
<rect x="874.7" y="1580.2" width="24.1" height="25.6" stroke="#fff" stroke-width="2.4" fill="none" />
<path d="M870.5 1584.6 L866.6 1584.6 L866.6 1601.6 L870.5 1601.6" stroke="#fff" stroke-width="2.2" fill="none" />
<path d="M903 1584.6 L906.9 1584.6 L906.9 1601.6 L903 1601.6" stroke="#fff" stroke-width="2.2" fill="none" />
<path d="M1008.6 1604.6 A16.8 16.8 0 1 1 1012.3 1592.2 L986 1592.2" fill="none" stroke="#0f7bd7" stroke-width="9"/>
<path d="M975.2 1596 C975.8 1581 986 1571.5 998 1570.5 C989.5 1573 984 1581 983.6 1590Z" fill="#0f7bd7"/>
<path d="M1077 1574 L1094 1574 L1098 1578 L1121 1578 L1121 1611 L1077 1611Z" fill="#f5c64c"/>
<path d="M1077 1586 L1121 1586 L1121 1611.5 L1077 1611.5Z" fill="#fbe08a"/>
<path d="M1087 1598 L1111 1598 L1111 1612.5 L1104 1612.5 L1104 1606 L1094 1606 L1094 1612.5 L1087 1612.5Z" fill="#3f9fe0"/>
<path d="M1191 1584 C1191 1565.5 1213.5 1565.5 1213.5 1584" fill="none" stroke="#e8e8e8" stroke-width="2.6"/>
<path d="M1178.5 1581.5 L1225.5 1581.5 L1224.5 1612 Q1224.3 1615.5 1220.5 1615.5 L1183.5 1615.5 Q1179.7 1615.5 1179.5 1612Z" fill="#f4f4f4"/>
<rect x="1191.0" y="1586.6" width="10.4" height="10.6" fill="#f25022"/>
<rect x="1203.2" y="1586.6" width="10.4" height="10.6" fill="#7fba00"/>
<rect x="1191.0" y="1599.0" width="10.4" height="10.6" fill="#00a4ef"/>
<rect x="1203.2" y="1599.0" width="10.4" height="10.6" fill="#ffb900"/>
<circle cx="1308.5" cy="1593.6" r="25.2" stroke="none" stroke-width="0" fill="#5aa70e" />
<path d="M1290 1577 L1296 1571.5 L1324 1596 L1327 1612 L1311 1608Z" fill="#fff"/>
<path d="M1316 1570.5 C1318 1580 1319 1586 1318 1592 M1322 1572.5 C1324 1580 1325 1586 1324 1592 M1310 1570 C1311 1578 1312 1582 1311.5 1586" fill="none" stroke="#9ad25a" stroke-width="2"/>
<circle cx="1413.0" cy="1592.0" r="22.6" stroke="#fff" stroke-width="3.4" fill="#2cc64e" />
<path d="M1390 1616 L1394.5 1602 L1405 1611Z" fill="#fff"/>
<path d="M1402.5 1581 C1400 1590 1412 1604 1424.5 1603.5 L1426.5 1598.5 L1420 1595.5 L1417.5 1598 C1413 1596.5 1409.5 1592.5 1408.5 1589 L1411 1586.5 L1408 1580Z" fill="#fff"/>
<rect x="1495.3" y="1570.2" width="42.3" height="40.8" stroke="#25c5f2" stroke-width="2.6" fill="#001d26" />
<text x="1502" y="1603" font-size="32" font-weight="bold" fill="#25c5f2" textLength="30" lengthAdjust="spacingAndGlyphs">Ps</text>
<path d="M1598 1587 L1606 1584 L1606 1610 L1598 1607Z" fill="#bfc5c9"/>
<path d="M1607 1576 L1644 1580 L1641 1607 L1609 1604Z" fill="#dfe5ea" stroke="#aab2b8" stroke-width="1.6"/>
<path d="M1611 1581 L1640 1584 L1638 1602 L1613 1600Z" fill="#d2e9f7"/>
<path d="M1613 1596 L1618 1594 L1621 1585 L1624 1597 L1628 1588 L1631 1597 L1637 1595" fill="none" stroke="#3a8fcf" stroke-width="1.6"/>
<ellipse cx="1627" cy="1611.5" rx="11" ry="4.6" fill="#d9dde0"/>
<circle cx="1725.5" cy="1593.2" r="23.7" stroke="none" stroke-width="0" fill="#db4437" />
<path d="M1725.5 1593.2 L1705 1581.3 A23.7 23.7 0 0 0 1737.4 1613.7Z" fill="#1ea362"/>
<path d="M1725.5 1593.2 L1737.4 1613.7 A23.7 23.7 0 0 0 1746 1581.3Z" fill="#ffcd40"/>
<path d="M1725.5 1593.2 L1746 1581.3 A23.7 23.7 0 0 0 1705 1581.3Z" fill="#db4437"/>
<path d="M1725.5 1581.5 L1746.2 1581.5 A23.7 23.7 0 0 1 1737.4 1613.7Z" fill="#ffcd40"/>
<circle cx="1725.5" cy="1593.2" r="10.8" stroke="#f1f1f1" stroke-width="2.2" fill="#4285f4" />
<path d="M2470.5 1600.5 L2482 1589 L2493.5 1600.5" stroke="#fff" stroke-width="2.6" fill="none" />
<rect x="2527.0" y="1585.5" width="22.5" height="16.0" stroke="#fff" stroke-width="2.2" fill="none" />
<path d="M2517 1582.5 L2517 1590 M2522 1582.5 L2522 1590 M2514.5 1590 L2524.5 1590 L2524.5 1594.5 L2519.5 1598 L2514.5 1594.5Z" stroke="#fff" stroke-width="1.8" fill="none" />
<path d="M2590.0 1605.5 A8 8 0 0 1 2598 1597.5" fill="none" stroke="#9a9a9a" stroke-width="2.2" transform="rotate(12 2598 1605.5)"/>
<path d="M2583.0 1605.5 A15 15 0 0 1 2598 1590.5" fill="none" stroke="#9a9a9a" stroke-width="2.2" transform="rotate(12 2598 1605.5)"/>
<path d="M2576.0 1605.5 A22 22 0 0 1 2598 1583.5" fill="none" stroke="#9a9a9a" stroke-width="2.2" transform="rotate(12 2598 1605.5)"/>
<circle cx="2597.0" cy="1604.8" r="3.2" stroke="none" stroke-width="0" fill="#fff" />
<path d="M2620 1588.5 L2626 1588.5 L2634 1581.5 L2634 1606 L2626 1599 L2620 1599Z" fill="none" stroke="#fff" stroke-width="2"/>
<path d="M2639 1588 C2642 1591.5 2642 1596 2639 1599.5 M2643.5 1584 C2649 1589.5 2649 1598 2643.5 1603.5 M2648 1580.5 C2656 1588 2656 1599.5 2648 1607" stroke="#fff" stroke-width="2" fill="none" />
<path d="M2823.4 1577.8 L2856.2 1577.8 L2856.2 1600.6 L2845.5 1600.6 L2839.8 1607.5 L2834.1 1600.6 L2823.4 1600.6Z" stroke="#fff" stroke-width="2.4" fill="none" />
</svg>
</div>
<div id="soft"></div>
</body></html>
